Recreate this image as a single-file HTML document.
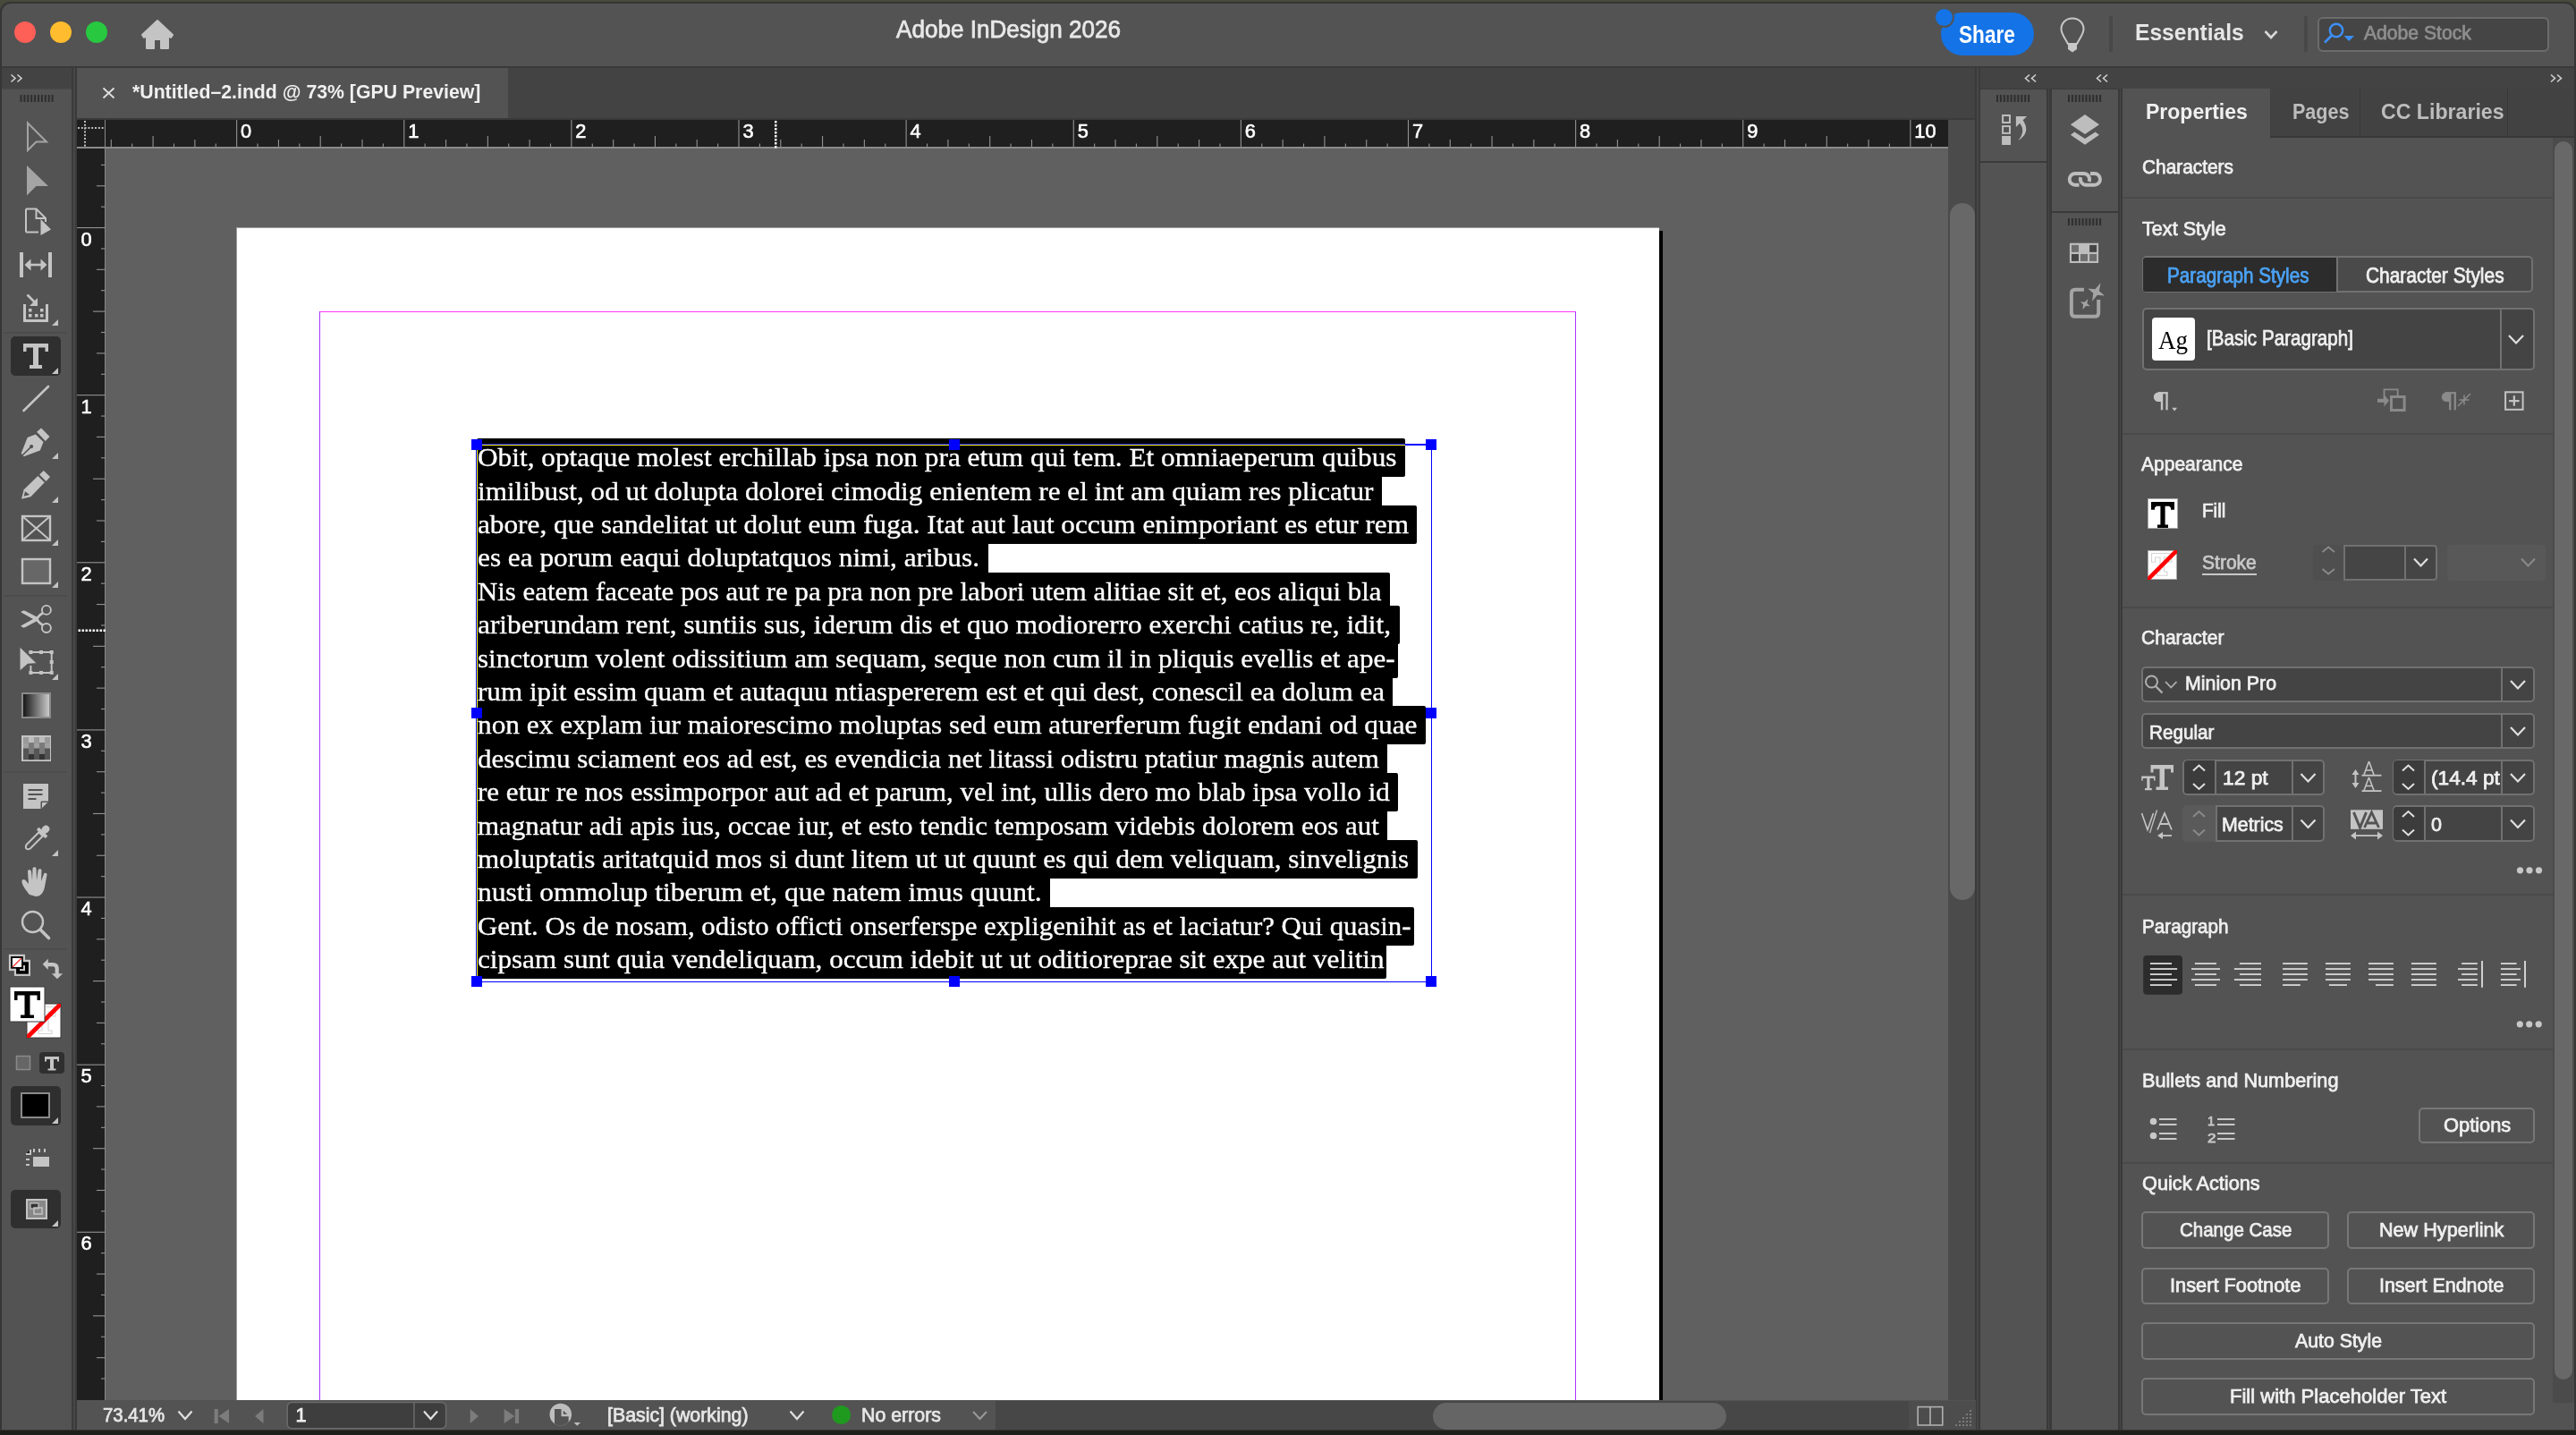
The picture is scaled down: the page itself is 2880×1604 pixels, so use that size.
<!DOCTYPE html><html><head><meta charset="utf-8"><style>html,body{margin:0;padding:0;}body{width:2880px;height:1604px;position:relative;overflow:hidden;background:#2c2e24;}body>div,body>svg{position:absolute;}</style></head><body>
<div style="left:0px;top:0px;width:2880px;height:1604px;background:#484a3c;"></div>
<div style="left:0px;top:1598px;width:2880px;height:6px;background:#1d201a;"></div>
<div style="left:0px;top:2px;width:2880px;height:1597px;background:#363636;border-radius:11px 11px 0 0"></div>
<div style="left:1.5px;top:3.5px;width:2876px;height:1594.5px;background:#535353;border-radius:10px 10px 0 0"></div>
<div style="left:2px;top:74px;width:2876px;height:2px;background:#3a3a3a;"></div>
<div style="left:16px;top:24px;width:24px;height:24px;background:#fe5f57;border-radius:50%"></div>
<div style="left:56px;top:24px;width:24px;height:24px;background:#febc2e;border-radius:50%"></div>
<div style="left:96px;top:24px;width:24px;height:24px;background:#28c840;border-radius:50%"></div>
<svg style="left:156px;top:21px;" width="40" height="36" viewBox="0 0 40 36"><path d="M20 2 L37 18 L35 21 L32 19 L32 33 L24 33 L24 23 L16 23 L16 33 L8 33 L8 19 L5 21 L3 18 Z" fill="#c4c4c4" stroke="#c4c4c4" stroke-width="2" stroke-linejoin="round"/></svg>
<div style="transform:scaleX(0.9709);left:1002.00px;top:17.76px;font:400 26.89px 'Liberation Sans', sans-serif;line-height:30.04px;color:#e8e8e8;white-space:pre;transform-origin:0 0;-webkit-text-stroke:0.75px #e8e8e8;">Adobe InDesign 2026</div>
<div style="left:2170px;top:14px;width:104px;height:48px;background:#1473e6;border-radius:24px"></div>
<div style="left:2161.5px;top:7.5px;width:23px;height:23px;background:#535353;border-radius:50%"></div>
<div style="left:2163.5px;top:9.5px;width:19px;height:19px;background:#1473e6;border-radius:50%"></div>
<div style="transform:scaleX(0.8420);left:2190.00px;top:23.86px;font:700 26.89px 'Liberation Sans', sans-serif;line-height:30.04px;color:#ffffff;white-space:pre;transform-origin:0 0;">Share</div>
<svg style="left:2300px;top:18px;" width="34" height="44" viewBox="0 0 34 44"><path d="M17 2.5 C9.5 2.5 4.5 8 4.5 14.5 C4.5 20 9 25 12 31 L22 31 C25 25 29.5 20 29.5 14.5 C29.5 8 24.5 2.5 17 2.5 Z" fill="none" stroke="#c8c8c8" stroke-width="2"/><path d="M12 31 L22 31 L22 37 L17 40.5 L12 37 Z" fill="#c8c8c8"/></svg>
<div style="left:2358px;top:18px;width:3.5px;height:40px;background:#484848;"></div>
<div style="transform:scaleX(0.9305);left:2387.10px;top:22.16px;font:700 26.45px 'Liberation Sans', sans-serif;line-height:29.55px;color:#e6e6e6;white-space:pre;transform-origin:0 0;">Essentials</div>
<svg style="left:2530px;top:32px;" width="18" height="14" viewBox="0 0 18 14"><path d="M2.5 3 L9 10 L15.5 3" fill="none" stroke="#d8d8d8" stroke-width="2.6"/></svg>
<div style="left:2576px;top:18px;width:3.5px;height:40px;background:#484848;"></div>
<div style="left:2590.5px;top:18.5px;width:259px;height:39.5px;background:#454545;border:2px solid #6c6c6c;border-radius:6px;box-sizing:border-box"></div>
<svg style="left:2596px;top:24px;" width="40" height="28" viewBox="0 0 40 28"><circle cx="16" cy="10" r="7.2" fill="none" stroke="#3d8ff5" stroke-width="2.4"/><path d="M11 15.5 L3 23.5" stroke="#3d8ff5" stroke-width="2.6"/><path d="M24.5 16 L36 16 L30.2 22 Z" fill="#3d8ff5"/></svg>
<div style="transform:scaleX(0.9630);left:2642.70px;top:24.54px;font:400 21.95px 'Liberation Sans', sans-serif;line-height:24.52px;color:#8e8e8e;white-space:pre;transform-origin:0 0;-webkit-text-stroke:0.75px #8e8e8e;">Adobe Stock</div>
<div style="left:2px;top:76px;width:78px;height:22px;background:#434343;"></div>
<div style="left:2px;top:98px;width:78px;height:2px;background:#474747;"></div>
<div style="left:80px;top:76px;width:6px;height:1522px;background:#3a3a3a;"></div>
<div style="left:82px;top:76px;width:2px;height:1522px;background:#474747;"></div>
<svg style="left:0;top:0" width="86" height="1604"><path d="M12.5 83.5 L17 87.5 L12.5 91.5 M19.5 83.5 L24 87.5 L19.5 91.5" fill="none" stroke="#d0d0d0" stroke-width="1.6"/><rect x="22.5" y="106" width="2" height="8" fill="#2e2e2e"/><rect x="26.4" y="106" width="2" height="8" fill="#2e2e2e"/><rect x="30.3" y="106" width="2" height="8" fill="#2e2e2e"/><rect x="34.2" y="106" width="2" height="8" fill="#2e2e2e"/><rect x="38.1" y="106" width="2" height="8" fill="#2e2e2e"/><rect x="42.0" y="106" width="2" height="8" fill="#2e2e2e"/><rect x="45.9" y="106" width="2" height="8" fill="#2e2e2e"/><rect x="49.8" y="106" width="2" height="8" fill="#2e2e2e"/><rect x="53.7" y="106" width="2" height="8" fill="#2e2e2e"/><rect x="57.6" y="106" width="2" height="8" fill="#2e2e2e"/><path d="M31 137.5 L52 158.5 L40.5 158.5 L31 168 Z" fill="none" stroke="#a4a4a4" stroke-width="2" stroke-linejoin="miter"/><path d="M30 185 L54 208 L40.5 208 L30 218.5 Z" fill="#a4a4a4"/><path d="M29 233.5 L40.5 233.5 L51 244 L51 248 M43 259.5 L29 259.5 Z" fill="none" stroke="#c4c4c4" stroke-width="2"/><path d="M29 233.5 L29 259.5" stroke="#c4c4c4" stroke-width="2"/><path d="M40.5 233.5 L40.5 244 L51 244" fill="none" stroke="#c4c4c4" stroke-width="2"/><path d="M45.5 245 L57 256.5 L45.5 263 Z" fill="#c4c4c4"/><rect x="22" y="282" width="4" height="28" fill="#c4c4c4"/><rect x="54" y="282" width="4" height="28" fill="#c4c4c4"/><path d="M31 296 L49 296" stroke="#c4c4c4" stroke-width="2.6"/><path d="M27.5 296 L34.5 289.5 L34.5 302.5 Z M52.5 296 L45.5 289.5 L45.5 302.5 Z" fill="#c4c4c4"/><path d="M30.5 329.5 L40 339" stroke="#c4c4c4" stroke-width="2.6"/><path d="M42 333 L42 342 L33 342 Z" fill="#c4c4c4"/><path d="M27.5 340 L27.5 358.5 L52.5 358.5 L52.5 340" fill="none" stroke="#c4c4c4" stroke-width="3"/><rect x="32" y="345" width="3.5" height="3.5" fill="#c4c4c4"/><rect x="32" y="351" width="3.5" height="3.5" fill="#c4c4c4"/><rect x="39" y="351" width="3.5" height="3.5" fill="#c4c4c4"/><rect x="45" y="351" width="3.5" height="3.5" fill="#c4c4c4"/><rect x="45" y="345" width="3.5" height="3.5" fill="#c4c4c4"/><path d="M65 357 L65 364 L58 364 Z" fill="#c4c4c4"/><rect x="4" y="371" width="71" height="1.5" fill="#4b4b4b"/><rect x="4" y="665" width="71" height="1.5" fill="#4b4b4b"/><rect x="4" y="862" width="71" height="1.5" fill="#4b4b4b"/><rect x="4" y="1060" width="71" height="1.5" fill="#4b4b4b"/><rect x="12" y="376" width="56" height="44" rx="5" fill="#2f2f2f"/><path d="M26 384 L54 384 L54 393 L50.5 393 L50.5 388.5 L43 388.5 L43 408 L47 408 L47 412 L33 412 L33 408 L37 408 L37 388.5 L29.5 388.5 L29.5 393 L26 393 Z" fill="#c4c4c4"/><path d="M65 411 L65 418 L58 418 Z" fill="#c4c4c4"/><path d="M26.5 459 L54 432" stroke="#c4c4c4" stroke-width="2.6" stroke-linecap="round"/><path d="M41.1 482.7 L46.1 478.4 L55.5 488 L50.8 493.1 Z" fill="#c4c4c4"/><path d="M39.8 485.4 L30.7 489 L23.7 506.8 L26.7 510.2 L44.8 503.5 L48.5 494.1 Z" fill="#c4c4c4"/><path d="M25 509 L35.1 499.1" stroke="#535353" stroke-width="1.6"/><circle cx="35.1" cy="499.1" r="2.1" fill="#535353"/><path d="M65 506 L65 513 L58 513 Z" fill="#c4c4c4"/><path d="M44.1 530.6 L48.8 526.1 L56 532.9 L51.5 537.9 Z" fill="#c4c4c4"/><path d="M42.4 531.9 L49.8 539.3 L34.4 555.3 L24 557.7 L26.7 547.3 Z" fill="#c4c4c4"/><path d="M28 549.3 L33.1 553 L26.7 554.7 Z" fill="#535353"/><path d="M65 555 L65 562 L58 562 Z" fill="#c4c4c4"/><rect x="25" y="577" width="31" height="27" fill="none" stroke="#c4c4c4" stroke-width="2.4"/><path d="M25 577 L56 604 M56 577 L25 604" stroke="#c4c4c4" stroke-width="2"/><path d="M65 603 L65 610 L58 610 Z" fill="#c4c4c4"/><rect x="25" y="625" width="31" height="27" fill="#676767" stroke="#c4c4c4" stroke-width="2.4"/><path d="M65 650 L65 657 L58 657 Z" fill="#c4c4c4"/><circle cx="51.9" cy="681.9" r="5" fill="none" stroke="#c4c4c4" stroke-width="1.9"/><circle cx="51.9" cy="702" r="5" fill="none" stroke="#c4c4c4" stroke-width="1.9"/><path d="M23.3 684.3 Q25 681.6 28 682.7 L43.5 690.8 L40.5 694 Z" fill="#c4c4c4"/><path d="M23.3 699.6 Q25 702.3 28 701.2 L43.5 693.1 L40.5 689.9 Z" fill="#c4c4c4"/><path d="M41 692 Q44 687 48 685.2 M41 692 Q44 697 48 698.7" fill="none" stroke="#c4c4c4" stroke-width="2.6"/><path d="M33.4 729 L58.7 729 M57.7 728 L57.7 752 M58.7 751.9 L33.4 751.9 M34.4 752 L34.4 744" fill="none" stroke="#c4c4c4" stroke-width="2"/><rect x="32.4" y="727" width="4" height="4" fill="#c4c4c4"/><rect x="44" y="727" width="4" height="4" fill="#c4c4c4"/><rect x="55.7" y="727" width="4" height="4" fill="#c4c4c4"/><rect x="55.7" y="738" width="4" height="4" fill="#c4c4c4"/><rect x="32.4" y="749.9" width="4" height="4" fill="#c4c4c4"/><rect x="44" y="749.9" width="4" height="4" fill="#c4c4c4"/><rect x="55.7" y="749.9" width="4" height="4" fill="#c4c4c4"/><path d="M22.1 723 L41.2 741.6 L30.9 742.2 L22.1 750 Z" fill="#c4c4c4" stroke="#535353" stroke-width="0.8"/><path d="M65 753 L65 760 L58 760 Z" fill="#c4c4c4"/><defs><linearGradient id="gr" x1="0" x2="1"><stop offset="0" stop-color="#111"/><stop offset="1" stop-color="#d0d0d0"/></linearGradient></defs><rect x="25" y="775" width="31" height="27" fill="url(#gr)" stroke="#8a8a8a" stroke-width="2"/><rect x="25" y="823" width="31" height="27" fill="#777" stroke="#c4c4c4" stroke-width="2"/><rect x="26" y="824.0" width="6" height="6.3" fill="#9a9a9a"/><rect x="32" y="824.0" width="6" height="6.3" fill="#bdbdbd"/><rect x="38" y="824.0" width="6" height="6.3" fill="#9a9a9a"/><rect x="44" y="824.0" width="6" height="6.3" fill="#bdbdbd"/><rect x="50" y="824.0" width="6" height="6.3" fill="#9a9a9a"/><rect x="26" y="830.3" width="6" height="6.3" fill="#a0a0a0"/><rect x="32" y="830.3" width="6" height="6.3" fill="#7a7a7a"/><rect x="38" y="830.3" width="6" height="6.3" fill="#a0a0a0"/><rect x="44" y="830.3" width="6" height="6.3" fill="#7a7a7a"/><rect x="50" y="830.3" width="6" height="6.3" fill="#a0a0a0"/><rect x="26" y="836.6" width="6" height="6.3" fill="#555"/><rect x="32" y="836.6" width="6" height="6.3" fill="#7a7a7a"/><rect x="38" y="836.6" width="6" height="6.3" fill="#555"/><rect x="44" y="836.6" width="6" height="6.3" fill="#7a7a7a"/><rect x="50" y="836.6" width="6" height="6.3" fill="#555"/><rect x="26" y="842.9" width="6" height="6.3" fill="#555"/><rect x="32" y="842.9" width="6" height="6.3" fill="#333"/><rect x="38" y="842.9" width="6" height="6.3" fill="#555"/><rect x="44" y="842.9" width="6" height="6.3" fill="#333"/><rect x="50" y="842.9" width="6" height="6.3" fill="#555"/><path d="M26 876 L54 876 L54 896 L46 904 L26 904 Z" fill="#c4c4c4"/><path d="M46 904 L46 896 L54 896" fill="#535353" stroke="#535353" stroke-width="1"/><path d="M47 903 L47 897 L53 897 Z" fill="#c4c4c4"/><rect x="31.5" y="882" width="16" height="2" fill="#535353"/><rect x="31.5" y="887" width="16" height="2" fill="#535353"/><rect x="31.5" y="892" width="9" height="2" fill="#535353"/><g transform="translate(40,938) rotate(45)"><rect x="-4" y="-20" width="8" height="9" rx="4" fill="#c4c4c4"/><rect x="-7" y="-12" width="14" height="4" rx="1" fill="#c4c4c4"/><path d="M-3 -8 L3 -8 L3 12 Q0 18 -3 12 Z" fill="none" stroke="#c4c4c4" stroke-width="2"/></g><path d="M65 950 L65 957 L58 957 Z" fill="#c4c4c4"/><path d="M33 1000 C29 995 25 990 24.5 986 C24 983 26.5 982 28.5 984 L32 988 L31 974 C31 971.5 34.5 971.5 35 974 L36 984 L36.5 971 C36.5 968.5 40.5 968.5 40.5 971 L41 984 L42.5 973 C43 970.5 46.5 970.5 46.5 973 L46 985 L49 977 C49.5 975 53 975.5 52.5 978 L50 991 C49 997 46 1002 40 1002 Z" fill="#c4c4c4"/><circle cx="36.5" cy="1030.5" r="11.5" fill="none" stroke="#c4c4c4" stroke-width="2.4"/><path d="M45 1039 L54.5 1048.5" stroke="#c4c4c4" stroke-width="3.6" stroke-linecap="round"/><rect x="9.9" y="1066.8" width="18.1" height="18.3" fill="#c8c8c8"/><rect x="15.9" y="1072.8" width="18.1" height="18.1" fill="#c8c8c8"/><rect x="12.1" y="1069" width="13.7" height="13.7" fill="#000"/><rect x="18.1" y="1075.2" width="13.8" height="13.5" fill="#000"/><rect x="13.9" y="1070.9" width="10.2" height="10.1" fill="#fff"/><path d="M14 1081 L24 1071" stroke="#ff3030" stroke-width="1.3"/><rect x="26" y="1079" width="2" height="6.1" fill="#c8c8c8"/><rect x="22" y="1083.1" width="6" height="2" fill="#c8c8c8"/><path d="M53 1078.2 L59 1078.2 Q63.7 1078.2 63.7 1083 L63.7 1089" fill="none" stroke="#c4c4c4" stroke-width="4.2"/><path d="M47.7 1077.8 L53.8 1071.7 L53.8 1084 Z M57.8 1088.2 L70.1 1088.2 L64 1094.2 Z" fill="#c4c4c4"/><rect x="30" y="1122" width="38" height="38" fill="#fff" stroke="#3a3a3a" stroke-width="1"/><path d="M51 1125.5 L62 1125.5 L62 1136 L58.5 1136 L58.5 1131 L54 1131 L54 1152 L58 1152 L58 1155.5 L43 1155.5 L43 1152 L47 1152 L47 1142" fill="none" stroke="#d4d4d4" stroke-width="1.1"/><defs><clipPath id="tb"><rect x="30" y="1122" width="38" height="38"/></clipPath></defs><path d="M28 1162 L70 1120" stroke="#ff0000" stroke-width="4.8" clip-path="url(#tb)"/><rect x="11" y="1103" width="39" height="39" fill="#fff" stroke="#3a3a3a" stroke-width="1"/><path d="M16 1108 L45 1108 L45 1118 L41.5 1118 L41.5 1112.5 L33.5 1112.5 L33.5 1134.5 L38 1134.5 L38 1138 L23 1138 L23 1134.5 L27.5 1134.5 L27.5 1112.5 L19.5 1112.5 L19.5 1118 L16 1118 Z" fill="#000"/><rect x="18.5" y="1180.5" width="15" height="15" fill="#666" stroke="#8a8a8a" stroke-width="1.5"/><rect x="44" y="1176" width="28" height="24" rx="4" fill="#2f2f2f"/><path d="M50 1181 L66 1181 L66 1186.5 L64 1186.5 L64 1184 L60 1184 L60 1194.5 L62.5 1194.5 L62.5 1196.5 L53.5 1196.5 L53.5 1194.5 L56 1194.5 L56 1184 L52 1184 L52 1186.5 L50 1186.5 Z" fill="#c4c4c4"/><rect x="12" y="1214" width="56" height="44" rx="5" fill="#2f2f2f"/><rect x="24" y="1222" width="31" height="27" fill="#000" stroke="#8a8a8a" stroke-width="2"/><path d="M65 1249 L65 1256 L58 1256 Z" fill="#c4c4c4"/><rect x="37" y="1293" width="18" height="11" fill="#c4c4c4"/><path d="M29 1290 L34 1290 L34 1285 M29 1296 L33 1296 M29 1302 L33 1302 M38 1284 L38 1288 M44 1284 L44 1288 M50 1284 L50 1288" stroke="#c4c4c4" stroke-width="2"/><rect x="12" y="1330" width="56" height="43" rx="5" fill="#2f2f2f"/><rect x="30" y="1341" width="22" height="21" fill="#888" stroke="#c4c4c4" stroke-width="2"/><rect x="34" y="1345" width="9" height="6" fill="#333" stroke="#c4c4c4" stroke-width="1.2"/><rect x="38" y="1350" width="9" height="7" fill="none" stroke="#c4c4c4" stroke-width="1.5"/><path d="M65 1364 L65 1371 L58 1371 Z" fill="#c4c4c4"/></svg>
<div style="left:86px;top:76px;width:2123px;height:56px;background:#434343;"></div>
<div style="left:86px;top:76px;width:482px;height:56px;background:#535353;"></div>
<div style="left:86px;top:132px;width:2123px;height:2px;background:#3a3a3a;"></div>
<svg style="left:114px;top:97px;" width="15" height="14" viewBox="0 0 15 14"><path d="M1.5 1.5 L13.5 12.5 M13.5 1.5 L1.5 12.5" stroke="#e0e0e0" stroke-width="1.8"/></svg>
<div style="transform:scaleX(0.9444);left:148.30px;top:89.81px;font:700 22.53px 'Liberation Sans', sans-serif;line-height:25.16px;color:#f0f0f0;white-space:pre;transform-origin:0 0;">*Untitled&#8211;2.indd @ 73% [GPU Preview]</div>
<div style="left:117px;top:165px;width:2061px;height:1401px;background:#606060;"></div>
<div style="left:86px;top:134px;width:2092px;height:30px;background:#1f1f1f;"></div>
<div style="left:86px;top:164px;width:31px;height:1402px;background:#1f1f1f;"></div>
<div style="left:86px;top:164px;width:2092px;height:1.5px;background:#8a8a8a;"></div>
<div style="left:116.5px;top:134px;width:1.5px;height:1432px;background:#8a8a8a;"></div>
<svg style="left:0;top:0" width="2880" height="1604"><rect x="87.0" y="142" width="2" height="2" fill="#bbb"/><rect x="94" y="135.0" width="2" height="2" fill="#bbb"/><rect x="90.8" y="142" width="2" height="2" fill="#bbb"/><rect x="94" y="138.8" width="2" height="2" fill="#bbb"/><rect x="94.6" y="142" width="2" height="2" fill="#bbb"/><rect x="94" y="142.6" width="2" height="2" fill="#bbb"/><rect x="98.4" y="142" width="2" height="2" fill="#bbb"/><rect x="94" y="146.4" width="2" height="2" fill="#bbb"/><rect x="102.2" y="142" width="2" height="2" fill="#bbb"/><rect x="94" y="150.2" width="2" height="2" fill="#bbb"/><rect x="106.0" y="142" width="2" height="2" fill="#bbb"/><rect x="94" y="154.0" width="2" height="2" fill="#bbb"/><rect x="109.8" y="142" width="2" height="2" fill="#bbb"/><rect x="94" y="157.8" width="2" height="2" fill="#bbb"/><rect x="113.6" y="142" width="2" height="2" fill="#bbb"/><rect x="94" y="161.6" width="2" height="2" fill="#bbb"/><rect x="123.76" y="156" width="1.1" height="8" fill="#939393"/><rect x="147.15" y="160.5" width="1.1" height="3.5" fill="#939393"/><rect x="170.54" y="152" width="1.1" height="12" fill="#939393"/><rect x="193.93" y="160.5" width="1.1" height="3.5" fill="#939393"/><rect x="217.32" y="156" width="1.1" height="8" fill="#939393"/><rect x="240.71" y="160.5" width="1.1" height="3.5" fill="#939393"/><rect x="264.10" y="134" width="1.1" height="30" fill="#939393"/><rect x="287.49" y="160.5" width="1.1" height="3.5" fill="#939393"/><rect x="310.88" y="156" width="1.1" height="8" fill="#939393"/><rect x="334.27" y="160.5" width="1.1" height="3.5" fill="#939393"/><rect x="357.66" y="152" width="1.1" height="12" fill="#939393"/><rect x="381.05" y="160.5" width="1.1" height="3.5" fill="#939393"/><rect x="404.44" y="156" width="1.1" height="8" fill="#939393"/><rect x="427.83" y="160.5" width="1.1" height="3.5" fill="#939393"/><rect x="451.22" y="134" width="1.1" height="30" fill="#939393"/><rect x="474.61" y="160.5" width="1.1" height="3.5" fill="#939393"/><rect x="498.00" y="156" width="1.1" height="8" fill="#939393"/><rect x="521.39" y="160.5" width="1.1" height="3.5" fill="#939393"/><rect x="544.78" y="152" width="1.1" height="12" fill="#939393"/><rect x="568.17" y="160.5" width="1.1" height="3.5" fill="#939393"/><rect x="591.56" y="156" width="1.1" height="8" fill="#939393"/><rect x="614.95" y="160.5" width="1.1" height="3.5" fill="#939393"/><rect x="638.34" y="134" width="1.1" height="30" fill="#939393"/><rect x="661.73" y="160.5" width="1.1" height="3.5" fill="#939393"/><rect x="685.12" y="156" width="1.1" height="8" fill="#939393"/><rect x="708.51" y="160.5" width="1.1" height="3.5" fill="#939393"/><rect x="731.90" y="152" width="1.1" height="12" fill="#939393"/><rect x="755.29" y="160.5" width="1.1" height="3.5" fill="#939393"/><rect x="778.68" y="156" width="1.1" height="8" fill="#939393"/><rect x="802.07" y="160.5" width="1.1" height="3.5" fill="#939393"/><rect x="825.46" y="134" width="1.1" height="30" fill="#939393"/><rect x="848.85" y="160.5" width="1.1" height="3.5" fill="#939393"/><rect x="872.24" y="156" width="1.1" height="8" fill="#939393"/><rect x="895.63" y="160.5" width="1.1" height="3.5" fill="#939393"/><rect x="919.02" y="152" width="1.1" height="12" fill="#939393"/><rect x="942.41" y="160.5" width="1.1" height="3.5" fill="#939393"/><rect x="965.80" y="156" width="1.1" height="8" fill="#939393"/><rect x="989.19" y="160.5" width="1.1" height="3.5" fill="#939393"/><rect x="1012.58" y="134" width="1.1" height="30" fill="#939393"/><rect x="1035.97" y="160.5" width="1.1" height="3.5" fill="#939393"/><rect x="1059.36" y="156" width="1.1" height="8" fill="#939393"/><rect x="1082.75" y="160.5" width="1.1" height="3.5" fill="#939393"/><rect x="1106.14" y="152" width="1.1" height="12" fill="#939393"/><rect x="1129.53" y="160.5" width="1.1" height="3.5" fill="#939393"/><rect x="1152.92" y="156" width="1.1" height="8" fill="#939393"/><rect x="1176.31" y="160.5" width="1.1" height="3.5" fill="#939393"/><rect x="1199.70" y="134" width="1.1" height="30" fill="#939393"/><rect x="1223.09" y="160.5" width="1.1" height="3.5" fill="#939393"/><rect x="1246.48" y="156" width="1.1" height="8" fill="#939393"/><rect x="1269.87" y="160.5" width="1.1" height="3.5" fill="#939393"/><rect x="1293.26" y="152" width="1.1" height="12" fill="#939393"/><rect x="1316.65" y="160.5" width="1.1" height="3.5" fill="#939393"/><rect x="1340.04" y="156" width="1.1" height="8" fill="#939393"/><rect x="1363.43" y="160.5" width="1.1" height="3.5" fill="#939393"/><rect x="1386.82" y="134" width="1.1" height="30" fill="#939393"/><rect x="1410.21" y="160.5" width="1.1" height="3.5" fill="#939393"/><rect x="1433.60" y="156" width="1.1" height="8" fill="#939393"/><rect x="1456.99" y="160.5" width="1.1" height="3.5" fill="#939393"/><rect x="1480.38" y="152" width="1.1" height="12" fill="#939393"/><rect x="1503.77" y="160.5" width="1.1" height="3.5" fill="#939393"/><rect x="1527.16" y="156" width="1.1" height="8" fill="#939393"/><rect x="1550.55" y="160.5" width="1.1" height="3.5" fill="#939393"/><rect x="1573.94" y="134" width="1.1" height="30" fill="#939393"/><rect x="1597.33" y="160.5" width="1.1" height="3.5" fill="#939393"/><rect x="1620.72" y="156" width="1.1" height="8" fill="#939393"/><rect x="1644.11" y="160.5" width="1.1" height="3.5" fill="#939393"/><rect x="1667.50" y="152" width="1.1" height="12" fill="#939393"/><rect x="1690.89" y="160.5" width="1.1" height="3.5" fill="#939393"/><rect x="1714.28" y="156" width="1.1" height="8" fill="#939393"/><rect x="1737.67" y="160.5" width="1.1" height="3.5" fill="#939393"/><rect x="1761.06" y="134" width="1.1" height="30" fill="#939393"/><rect x="1784.45" y="160.5" width="1.1" height="3.5" fill="#939393"/><rect x="1807.84" y="156" width="1.1" height="8" fill="#939393"/><rect x="1831.23" y="160.5" width="1.1" height="3.5" fill="#939393"/><rect x="1854.62" y="152" width="1.1" height="12" fill="#939393"/><rect x="1878.01" y="160.5" width="1.1" height="3.5" fill="#939393"/><rect x="1901.40" y="156" width="1.1" height="8" fill="#939393"/><rect x="1924.79" y="160.5" width="1.1" height="3.5" fill="#939393"/><rect x="1948.18" y="134" width="1.1" height="30" fill="#939393"/><rect x="1971.57" y="160.5" width="1.1" height="3.5" fill="#939393"/><rect x="1994.96" y="156" width="1.1" height="8" fill="#939393"/><rect x="2018.35" y="160.5" width="1.1" height="3.5" fill="#939393"/><rect x="2041.74" y="152" width="1.1" height="12" fill="#939393"/><rect x="2065.13" y="160.5" width="1.1" height="3.5" fill="#939393"/><rect x="2088.52" y="156" width="1.1" height="8" fill="#939393"/><rect x="2111.91" y="160.5" width="1.1" height="3.5" fill="#939393"/><rect x="2135.30" y="134" width="1.1" height="30" fill="#939393"/><rect x="2158.69" y="160.5" width="1.1" height="3.5" fill="#939393"/></svg>
<div style="left:269.10px;top:135.27px;font:400 21.80px 'Liberation Sans', sans-serif;line-height:24.35px;color:#ffffff;white-space:pre;transform-origin:0 0;-webkit-text-stroke:0.6px #ffffff;">0</div>
<div style="left:456.22px;top:135.27px;font:400 21.80px 'Liberation Sans', sans-serif;line-height:24.35px;color:#ffffff;white-space:pre;transform-origin:0 0;-webkit-text-stroke:0.6px #ffffff;">1</div>
<div style="left:643.34px;top:135.27px;font:400 21.80px 'Liberation Sans', sans-serif;line-height:24.35px;color:#ffffff;white-space:pre;transform-origin:0 0;-webkit-text-stroke:0.6px #ffffff;">2</div>
<div style="left:830.46px;top:135.27px;font:400 21.80px 'Liberation Sans', sans-serif;line-height:24.35px;color:#ffffff;white-space:pre;transform-origin:0 0;-webkit-text-stroke:0.6px #ffffff;">3</div>
<div style="left:1017.58px;top:135.27px;font:400 21.80px 'Liberation Sans', sans-serif;line-height:24.35px;color:#ffffff;white-space:pre;transform-origin:0 0;-webkit-text-stroke:0.6px #ffffff;">4</div>
<div style="left:1204.70px;top:135.27px;font:400 21.80px 'Liberation Sans', sans-serif;line-height:24.35px;color:#ffffff;white-space:pre;transform-origin:0 0;-webkit-text-stroke:0.6px #ffffff;">5</div>
<div style="left:1391.82px;top:135.27px;font:400 21.80px 'Liberation Sans', sans-serif;line-height:24.35px;color:#ffffff;white-space:pre;transform-origin:0 0;-webkit-text-stroke:0.6px #ffffff;">6</div>
<div style="left:1578.94px;top:135.27px;font:400 21.80px 'Liberation Sans', sans-serif;line-height:24.35px;color:#ffffff;white-space:pre;transform-origin:0 0;-webkit-text-stroke:0.6px #ffffff;">7</div>
<div style="left:1766.06px;top:135.27px;font:400 21.80px 'Liberation Sans', sans-serif;line-height:24.35px;color:#ffffff;white-space:pre;transform-origin:0 0;-webkit-text-stroke:0.6px #ffffff;">8</div>
<div style="left:1953.18px;top:135.27px;font:400 21.80px 'Liberation Sans', sans-serif;line-height:24.35px;color:#ffffff;white-space:pre;transform-origin:0 0;-webkit-text-stroke:0.6px #ffffff;">9</div>
<div style="left:2140.30px;top:135.27px;font:400 21.80px 'Liberation Sans', sans-serif;line-height:24.35px;color:#ffffff;white-space:pre;transform-origin:0 0;-webkit-text-stroke:0.6px #ffffff;">10</div>
<svg style="left:0;top:0" width="2880" height="1604"><rect x="113" y="183.83" width="4" height="1.1" fill="#939393"/><rect x="108" y="207.22" width="9" height="1.1" fill="#939393"/><rect x="113" y="230.61" width="4" height="1.1" fill="#939393"/><rect x="86" y="254.00" width="31" height="1.1" fill="#939393"/><rect x="113" y="277.39" width="4" height="1.1" fill="#939393"/><rect x="108" y="300.78" width="9" height="1.1" fill="#939393"/><rect x="113" y="324.17" width="4" height="1.1" fill="#939393"/><rect x="104" y="347.56" width="13" height="1.1" fill="#939393"/><rect x="113" y="370.95" width="4" height="1.1" fill="#939393"/><rect x="108" y="394.34" width="9" height="1.1" fill="#939393"/><rect x="113" y="417.73" width="4" height="1.1" fill="#939393"/><rect x="86" y="441.12" width="31" height="1.1" fill="#939393"/><rect x="113" y="464.51" width="4" height="1.1" fill="#939393"/><rect x="108" y="487.90" width="9" height="1.1" fill="#939393"/><rect x="113" y="511.29" width="4" height="1.1" fill="#939393"/><rect x="104" y="534.68" width="13" height="1.1" fill="#939393"/><rect x="113" y="558.07" width="4" height="1.1" fill="#939393"/><rect x="108" y="581.46" width="9" height="1.1" fill="#939393"/><rect x="113" y="604.85" width="4" height="1.1" fill="#939393"/><rect x="86" y="628.24" width="31" height="1.1" fill="#939393"/><rect x="113" y="651.63" width="4" height="1.1" fill="#939393"/><rect x="108" y="675.02" width="9" height="1.1" fill="#939393"/><rect x="113" y="698.41" width="4" height="1.1" fill="#939393"/><rect x="104" y="721.80" width="13" height="1.1" fill="#939393"/><rect x="113" y="745.19" width="4" height="1.1" fill="#939393"/><rect x="108" y="768.58" width="9" height="1.1" fill="#939393"/><rect x="113" y="791.97" width="4" height="1.1" fill="#939393"/><rect x="86" y="815.36" width="31" height="1.1" fill="#939393"/><rect x="113" y="838.75" width="4" height="1.1" fill="#939393"/><rect x="108" y="862.14" width="9" height="1.1" fill="#939393"/><rect x="113" y="885.53" width="4" height="1.1" fill="#939393"/><rect x="104" y="908.92" width="13" height="1.1" fill="#939393"/><rect x="113" y="932.31" width="4" height="1.1" fill="#939393"/><rect x="108" y="955.70" width="9" height="1.1" fill="#939393"/><rect x="113" y="979.09" width="4" height="1.1" fill="#939393"/><rect x="86" y="1002.48" width="31" height="1.1" fill="#939393"/><rect x="113" y="1025.87" width="4" height="1.1" fill="#939393"/><rect x="108" y="1049.26" width="9" height="1.1" fill="#939393"/><rect x="113" y="1072.65" width="4" height="1.1" fill="#939393"/><rect x="104" y="1096.04" width="13" height="1.1" fill="#939393"/><rect x="113" y="1119.43" width="4" height="1.1" fill="#939393"/><rect x="108" y="1142.82" width="9" height="1.1" fill="#939393"/><rect x="113" y="1166.21" width="4" height="1.1" fill="#939393"/><rect x="86" y="1189.60" width="31" height="1.1" fill="#939393"/><rect x="113" y="1212.99" width="4" height="1.1" fill="#939393"/><rect x="108" y="1236.38" width="9" height="1.1" fill="#939393"/><rect x="113" y="1259.77" width="4" height="1.1" fill="#939393"/><rect x="104" y="1283.16" width="13" height="1.1" fill="#939393"/><rect x="113" y="1306.55" width="4" height="1.1" fill="#939393"/><rect x="108" y="1329.94" width="9" height="1.1" fill="#939393"/><rect x="113" y="1353.33" width="4" height="1.1" fill="#939393"/><rect x="86" y="1376.72" width="31" height="1.1" fill="#939393"/><rect x="113" y="1400.11" width="4" height="1.1" fill="#939393"/><rect x="108" y="1423.50" width="9" height="1.1" fill="#939393"/><rect x="113" y="1446.89" width="4" height="1.1" fill="#939393"/><rect x="104" y="1470.28" width="13" height="1.1" fill="#939393"/><rect x="113" y="1493.67" width="4" height="1.1" fill="#939393"/><rect x="108" y="1517.06" width="9" height="1.1" fill="#939393"/><rect x="113" y="1540.45" width="4" height="1.1" fill="#939393"/><rect x="87.5" y="703.5" width="2.5" height="2.5" fill="#fff"/><rect x="91.5" y="703.5" width="2.5" height="2.5" fill="#fff"/><rect x="95.5" y="703.5" width="2.5" height="2.5" fill="#fff"/><rect x="99.5" y="703.5" width="2.5" height="2.5" fill="#fff"/><rect x="103.5" y="703.5" width="2.5" height="2.5" fill="#fff"/><rect x="107.5" y="703.5" width="2.5" height="2.5" fill="#fff"/><rect x="111.5" y="703.5" width="2.5" height="2.5" fill="#fff"/><rect x="115.5" y="703.5" width="2.5" height="2.5" fill="#fff"/><rect x="866" y="135.0" width="2.5" height="2.5" fill="#fff"/><rect x="866" y="139.0" width="2.5" height="2.5" fill="#fff"/><rect x="866" y="143.0" width="2.5" height="2.5" fill="#fff"/><rect x="866" y="147.0" width="2.5" height="2.5" fill="#fff"/><rect x="866" y="151.0" width="2.5" height="2.5" fill="#fff"/><rect x="866" y="155.0" width="2.5" height="2.5" fill="#fff"/><rect x="866" y="159.0" width="2.5" height="2.5" fill="#fff"/><rect x="866" y="163.0" width="2.5" height="2.5" fill="#fff"/></svg>
<div style="left:90.50px;top:255.77px;font:400 21.80px 'Liberation Sans', sans-serif;line-height:24.35px;color:#ffffff;white-space:pre;transform-origin:0 0;-webkit-text-stroke:0.6px #ffffff;">0</div>
<div style="left:90.50px;top:442.89px;font:400 21.80px 'Liberation Sans', sans-serif;line-height:24.35px;color:#ffffff;white-space:pre;transform-origin:0 0;-webkit-text-stroke:0.6px #ffffff;">1</div>
<div style="left:90.50px;top:630.01px;font:400 21.80px 'Liberation Sans', sans-serif;line-height:24.35px;color:#ffffff;white-space:pre;transform-origin:0 0;-webkit-text-stroke:0.6px #ffffff;">2</div>
<div style="left:90.50px;top:817.13px;font:400 21.80px 'Liberation Sans', sans-serif;line-height:24.35px;color:#ffffff;white-space:pre;transform-origin:0 0;-webkit-text-stroke:0.6px #ffffff;">3</div>
<div style="left:90.50px;top:1004.25px;font:400 21.80px 'Liberation Sans', sans-serif;line-height:24.35px;color:#ffffff;white-space:pre;transform-origin:0 0;-webkit-text-stroke:0.6px #ffffff;">4</div>
<div style="left:90.50px;top:1191.37px;font:400 21.80px 'Liberation Sans', sans-serif;line-height:24.35px;color:#ffffff;white-space:pre;transform-origin:0 0;-webkit-text-stroke:0.6px #ffffff;">5</div>
<div style="left:90.50px;top:1378.49px;font:400 21.80px 'Liberation Sans', sans-serif;line-height:24.35px;color:#ffffff;white-space:pre;transform-origin:0 0;-webkit-text-stroke:0.6px #ffffff;">6</div>
<div style="left:2178px;top:134px;width:31px;height:1432px;background:#4b4b4b;"></div>
<div style="left:2180px;top:227px;width:28px;height:779px;background:#686868;border-radius:14px"></div>
<div style="left:2208px;top:76px;width:6px;height:1522px;background:#3a3a3a;"></div>
<div style="left:2210px;top:76px;width:2px;height:1522px;background:#474747;"></div>
<div style="left:1855px;top:258px;width:4px;height:1307px;background:#000;"></div>
<div style="left:264px;top:254px;width:1591px;height:1311px;background:#ffffff;"></div>
<div style="left:264px;top:254px;width:1591px;height:1px;background:#9a9a9a;"></div>
<div style="left:264px;top:254px;width:1px;height:1311px;background:#9a9a9a;"></div>
<div style="left:357px;top:348px;width:1405px;height:1.3px;background:#ff33ff;"></div>
<div style="left:357px;top:348px;width:1.3px;height:1217px;background:#a833ff;"></div>
<div style="left:1760.7px;top:348px;width:1.3px;height:1217px;background:#a833ff;"></div>
<div style="left:533px;top:490.1px;width:1038px;height:43.2px;background:#000;border-radius:2px"></div>
<div style="left:533px;top:527.5px;width:1012px;height:43.2px;background:#000;border-radius:2px"></div>
<div style="left:533px;top:564.9px;width:1051px;height:43.2px;background:#000;border-radius:2px"></div>
<div style="left:533px;top:602.3px;width:572px;height:43.2px;background:#000;border-radius:2px"></div>
<div style="left:533px;top:639.7px;width:1021px;height:43.2px;background:#000;border-radius:2px"></div>
<div style="left:533px;top:677.1px;width:1032px;height:43.2px;background:#000;border-radius:2px"></div>
<div style="left:533px;top:714.5px;width:1030px;height:43.2px;background:#000;border-radius:2px"></div>
<div style="left:533px;top:751.9px;width:1024px;height:43.2px;background:#000;border-radius:2px"></div>
<div style="left:533px;top:789.3px;width:1061px;height:43.2px;background:#000;border-radius:2px"></div>
<div style="left:533px;top:826.7px;width:1018px;height:43.2px;background:#000;border-radius:2px"></div>
<div style="left:533px;top:864.1px;width:1030px;height:43.2px;background:#000;border-radius:2px"></div>
<div style="left:533px;top:901.5px;width:1018px;height:43.2px;background:#000;border-radius:2px"></div>
<div style="left:533px;top:938.9px;width:1052px;height:43.2px;background:#000;border-radius:2px"></div>
<div style="left:533px;top:976.3px;width:641px;height:43.2px;background:#000;border-radius:2px"></div>
<div style="left:533px;top:1013.7px;width:1048px;height:43.2px;background:#000;border-radius:2px"></div>
<div style="left:533px;top:1051.1px;width:1017px;height:43.2px;background:#000;border-radius:2px"></div>
<div style="transform:scaleX(1.0488);left:533.50px;top:494.11px;font:400 29.85px 'Liberation Serif', serif;line-height:33.04px;color:#ffffff;white-space:pre;transform-origin:0 0;-webkit-text-stroke:0.35px #ffffff;">Obit, optaque molest erchillab ipsa non pra etum qui tem. Et omniaeperum quibus</div>
<div style="transform:scaleX(1.0453);left:533.50px;top:531.51px;font:400 29.85px 'Liberation Serif', serif;line-height:33.04px;color:#ffffff;white-space:pre;transform-origin:0 0;-webkit-text-stroke:0.35px #ffffff;">imilibust, od ut dolupta dolorei cimodig enientem re el int am quiam res plicatur</div>
<div style="transform:scaleX(1.0468);left:533.50px;top:568.91px;font:400 29.85px 'Liberation Serif', serif;line-height:33.04px;color:#ffffff;white-space:pre;transform-origin:0 0;-webkit-text-stroke:0.35px #ffffff;">abore, que sandelitat ut dolut eum fuga. Itat aut laut occum enimporiant es etur rem</div>
<div style="transform:scaleX(1.0477);left:533.50px;top:606.31px;font:400 29.85px 'Liberation Serif', serif;line-height:33.04px;color:#ffffff;white-space:pre;transform-origin:0 0;-webkit-text-stroke:0.35px #ffffff;">es ea porum eaqui doluptatquos nimi, aribus.</div>
<div style="transform:scaleX(1.0334);left:533.50px;top:643.71px;font:400 29.85px 'Liberation Serif', serif;line-height:33.04px;color:#ffffff;white-space:pre;transform-origin:0 0;-webkit-text-stroke:0.35px #ffffff;">Nis eatem faceate pos aut re pa pra non pre labori utem alitiae sit et, eos aliqui bla</div>
<div style="transform:scaleX(1.0493);left:533.50px;top:681.11px;font:400 29.85px 'Liberation Serif', serif;line-height:33.04px;color:#ffffff;white-space:pre;transform-origin:0 0;-webkit-text-stroke:0.35px #ffffff;">ariberundam rent, suntiis sus, iderum dis et quo modiorerro exerchi catius re, idit,</div>
<div style="transform:scaleX(1.0397);left:533.50px;top:718.51px;font:400 29.85px 'Liberation Serif', serif;line-height:33.04px;color:#ffffff;white-space:pre;transform-origin:0 0;-webkit-text-stroke:0.35px #ffffff;">sinctorum volent odissitium am sequam, seque non cum il in pliquis evellis et ape-</div>
<div style="transform:scaleX(1.0431);left:533.50px;top:755.91px;font:400 29.85px 'Liberation Serif', serif;line-height:33.04px;color:#ffffff;white-space:pre;transform-origin:0 0;-webkit-text-stroke:0.35px #ffffff;">rum ipit essim quam et autaquu ntiaspererem est et qui dest, conescil ea dolum ea</div>
<div style="transform:scaleX(1.0493);left:533.50px;top:793.31px;font:400 29.85px 'Liberation Serif', serif;line-height:33.04px;color:#ffffff;white-space:pre;transform-origin:0 0;-webkit-text-stroke:0.35px #ffffff;">non ex explam iur maiorescimo moluptas sed eum aturerferum fugit endani od quae</div>
<div style="transform:scaleX(1.0403);left:533.50px;top:830.71px;font:400 29.85px 'Liberation Serif', serif;line-height:33.04px;color:#ffffff;white-space:pre;transform-origin:0 0;-webkit-text-stroke:0.35px #ffffff;">descimu sciament eos ad est, es evendicia net litassi odistru ptatiur magnis autem</div>
<div style="transform:scaleX(1.0401);left:533.50px;top:868.11px;font:400 29.85px 'Liberation Serif', serif;line-height:33.04px;color:#ffffff;white-space:pre;transform-origin:0 0;-webkit-text-stroke:0.35px #ffffff;">re etur re nos essimporpor aut ad et parum, vel int, ullis dero mo blab ipsa vollo id</div>
<div style="transform:scaleX(1.0381);left:533.50px;top:905.51px;font:400 29.85px 'Liberation Serif', serif;line-height:33.04px;color:#ffffff;white-space:pre;transform-origin:0 0;-webkit-text-stroke:0.35px #ffffff;">magnatur adi apis ius, occae iur, et esto tendic temposam videbis dolorem eos aut</div>
<div style="transform:scaleX(1.0432);left:533.50px;top:942.91px;font:400 29.85px 'Liberation Serif', serif;line-height:33.04px;color:#ffffff;white-space:pre;transform-origin:0 0;-webkit-text-stroke:0.35px #ffffff;">moluptatis aritatquid mos si dunt litem ut ut quunt es qui dem veliquam, sinvelignis</div>
<div style="transform:scaleX(1.0582);left:533.50px;top:980.31px;font:400 29.85px 'Liberation Serif', serif;line-height:33.04px;color:#ffffff;white-space:pre;transform-origin:0 0;-webkit-text-stroke:0.35px #ffffff;">nusti ommolup tiberum et, que natem imus quunt.</div>
<div style="transform:scaleX(1.0343);left:533.50px;top:1017.71px;font:400 29.85px 'Liberation Serif', serif;line-height:33.04px;color:#ffffff;white-space:pre;transform-origin:0 0;-webkit-text-stroke:0.35px #ffffff;">Gent. Os de nosam, odisto officti onserferspe expligenihit as et laciatur? Qui quasin-</div>
<div style="transform:scaleX(1.0425);left:533.50px;top:1055.11px;font:400 29.85px 'Liberation Serif', serif;line-height:33.04px;color:#ffffff;white-space:pre;transform-origin:0 0;-webkit-text-stroke:0.35px #ffffff;">cipsam sunt quia vendeliquam, occum idebit ut ut oditioreprae sit expe aut velitin</div>
<div style="left:532px;top:496px;width:1069px;height:1px;background:#0000ff;"></div>
<div style="left:533px;top:497px;width:1068px;height:1px;background:#ffff00;mix-blend-mode:difference"></div>
<div style="left:532px;top:496px;width:1px;height:602px;background:#0000ff;"></div>
<div style="left:533px;top:498px;width:1px;height:599px;background:#ffff00;mix-blend-mode:difference"></div>
<div style="left:1600px;top:496px;width:1px;height:602px;background:#0000ff;"></div>
<div style="left:532px;top:1096.5px;width:1069px;height:1.2px;background:#0000ff;"></div>
<div style="left:527px;top:491px;width:12px;height:12px;background:#0000ff;"></div>
<div style="left:527px;top:791px;width:12px;height:12px;background:#0000ff;"></div>
<div style="left:527px;top:1091px;width:12px;height:12px;background:#0000ff;"></div>
<div style="left:1060.5px;top:491px;width:12px;height:12px;background:#0000ff;"></div>
<div style="left:1060.5px;top:1091px;width:12px;height:12px;background:#0000ff;"></div>
<div style="left:1594px;top:491px;width:12px;height:12px;background:#0000ff;"></div>
<div style="left:1594px;top:791px;width:12px;height:12px;background:#0000ff;"></div>
<div style="left:1594px;top:1091px;width:12px;height:12px;background:#0000ff;"></div>
<div style="left:86px;top:1565px;width:2123px;height:33px;background:#535353;"></div>
<div style="left:1113px;top:1566px;width:1021px;height:32px;background:#474747;"></div>
<div style="left:2134px;top:1566px;width:75px;height:32px;background:#4d4d4d;"></div>
<div style="left:1602px;top:1568px;width:328px;height:29.5px;background:#656565;border-radius:15px"></div>
<div style="transform:scaleX(0.9462);left:115.00px;top:1569.93px;font:400 21.51px 'Liberation Sans', sans-serif;line-height:24.03px;color:#e6e6e6;white-space:pre;transform-origin:0 0;-webkit-text-stroke:0.75px #e6e6e6;">73.41%</div>
<svg style="left:0;top:0" width="2880" height="1604"><path d="M199.5 1577.5 L207.0 1586.0 L214.5 1577.5" fill="none" stroke="#e0e0e0" stroke-width="2.2"/><rect x="239.6" y="1575" width="4.2" height="16" fill="#7c7c7c"/><path d="M256 1575 L244.5 1583 L256 1591 Z" fill="#7c7c7c"/><path d="M294.5 1575 L285 1583 L294.5 1591 Z" fill="#7c7c7c"/><rect x="321.2" y="1567.6" width="177.4" height="29.2" rx="5" fill="#3e3e3e" stroke="#6b6b6b" stroke-width="1.5"/><rect x="462.2" y="1567.6" width="1.5" height="29.2" fill="#6b6b6b"/><path d="M474 1577.5 L481.5 1586.0 L489 1577.5" fill="none" stroke="#e0e0e0" stroke-width="2.2"/><path d="M525.7 1575 L535 1583 L525.7 1591 Z" fill="#7c7c7c"/><path d="M563.6 1575 L575.3 1583 L563.6 1591 Z" fill="#7c7c7c"/><rect x="575.9" y="1575" width="4.2" height="16" fill="#7c7c7c"/><defs><clipPath id="cc"><circle cx="626.8" cy="1581" r="12.3"/></clipPath></defs><circle cx="626.8" cy="1581" r="12.3" fill="#bdbdbd"/><path d="M620 1575 L627.5 1575 L627.5 1583.3 L635.7 1583.3 L635.7 1600 L620 1600 Z" fill="#535353" clip-path="url(#cc)"/><path d="M629.8 1576.8 L634.1 1580.7 L629.8 1580.7 Z" fill="#535353"/><path d="M641.6 1590 L649 1590 L645.3 1593.8 Z" fill="#bdbdbd"/><path d="M883.5 1577.5 L891.0 1586.0 L898.5 1577.5" fill="none" stroke="#e0e0e0" stroke-width="2.2"/><circle cx="940.6" cy="1581.5" r="10.5" fill="#1f9a1f"/><path d="M1088 1578 L1095.5 1586 L1103 1578" fill="none" stroke="#9a9a9a" stroke-width="2"/><rect x="2144.2" y="1572.6" width="27.6" height="20.4" fill="none" stroke="#b0b0b0" stroke-width="1.6"/><rect x="2157.2" y="1572.6" width="1.6" height="20.4" fill="#b0b0b0"/><rect x="2202.2" y="1576.2" width="1.7" height="1.7" fill="#8e8e8e"/><rect x="2198.2" y="1580.2" width="1.7" height="1.7" fill="#8e8e8e"/><rect x="2202.2" y="1580.2" width="1.7" height="1.7" fill="#8e8e8e"/><rect x="2194.2" y="1584.2" width="1.7" height="1.7" fill="#8e8e8e"/><rect x="2198.2" y="1584.2" width="1.7" height="1.7" fill="#8e8e8e"/><rect x="2202.2" y="1584.2" width="1.7" height="1.7" fill="#8e8e8e"/><rect x="2190.2" y="1588.2" width="1.7" height="1.7" fill="#8e8e8e"/><rect x="2194.2" y="1588.2" width="1.7" height="1.7" fill="#8e8e8e"/><rect x="2198.2" y="1588.2" width="1.7" height="1.7" fill="#8e8e8e"/><rect x="2202.2" y="1588.2" width="1.7" height="1.7" fill="#8e8e8e"/><rect x="2186.2" y="1592.2" width="1.7" height="1.7" fill="#8e8e8e"/><rect x="2190.2" y="1592.2" width="1.7" height="1.7" fill="#8e8e8e"/><rect x="2194.2" y="1592.2" width="1.7" height="1.7" fill="#8e8e8e"/><rect x="2198.2" y="1592.2" width="1.7" height="1.7" fill="#8e8e8e"/><rect x="2202.2" y="1592.2" width="1.7" height="1.7" fill="#8e8e8e"/></svg>
<div style="left:330.50px;top:1569.87px;font:400 21.80px 'Liberation Sans', sans-serif;line-height:24.35px;color:#f0f0f0;white-space:pre;transform-origin:0 0;-webkit-text-stroke:0.75px #f0f0f0;">1</div>
<div style="transform:scaleX(0.9912);left:678.50px;top:1570.13px;font:400 21.51px 'Liberation Sans', sans-serif;line-height:24.03px;color:#e6e6e6;white-space:pre;transform-origin:0 0;-webkit-text-stroke:0.75px #e6e6e6;">[Basic] (working)</div>
<div style="transform:scaleX(0.9932);left:963.00px;top:1570.13px;font:400 21.51px 'Liberation Sans', sans-serif;line-height:24.03px;color:#e6e6e6;white-space:pre;transform-origin:0 0;-webkit-text-stroke:0.75px #e6e6e6;">No errors</div>
<div style="left:2214px;top:76px;width:664px;height:23px;background:#434343;"></div>
<div style="left:2214px;top:98.5px;width:664px;height:1.5px;background:#3a3a3a;"></div>
<div style="left:2288px;top:99px;width:6px;height:1499px;background:#3a3a3a;"></div>
<div style="left:2368px;top:99px;width:5px;height:1499px;background:#3a3a3a;"></div>
<div style="left:2370px;top:99px;width:1.2px;height:1499px;background:#464646;"></div>
<div style="left:2290px;top:99px;width:1.2px;height:1499px;background:#464646;"></div>
<div style="left:2214px;top:179.8px;width:74px;height:2.2px;background:#3a3a3a;"></div>
<div style="left:2294px;top:236.3px;width:74px;height:2.2px;background:#3a3a3a;"></div>
<svg style="left:0;top:0" width="2880" height="1604"><path d="M2269 83.5 L2264.5 87.5 L2269 91.5 M2276 83.5 L2271.5 87.5 L2276 91.5" fill="none" stroke="#d0d0d0" stroke-width="1.6"/><path d="M2349 83.5 L2344.5 87.5 L2349 91.5 M2356 83.5 L2351.5 87.5 L2356 91.5" fill="none" stroke="#d0d0d0" stroke-width="1.6"/><path d="M2852 83.5 L2856.5 87.5 L2852 91.5 M2859 83.5 L2863.5 87.5 L2859 91.5" fill="none" stroke="#d0d0d0" stroke-width="1.6"/><rect x="2232.0" y="106" width="2" height="8" fill="#2e2e2e"/><rect x="2235.9" y="106" width="2" height="8" fill="#2e2e2e"/><rect x="2239.8" y="106" width="2" height="8" fill="#2e2e2e"/><rect x="2243.7" y="106" width="2" height="8" fill="#2e2e2e"/><rect x="2247.6" y="106" width="2" height="8" fill="#2e2e2e"/><rect x="2251.5" y="106" width="2" height="8" fill="#2e2e2e"/><rect x="2255.4" y="106" width="2" height="8" fill="#2e2e2e"/><rect x="2259.3" y="106" width="2" height="8" fill="#2e2e2e"/><rect x="2263.2" y="106" width="2" height="8" fill="#2e2e2e"/><rect x="2267.1" y="106" width="2" height="8" fill="#2e2e2e"/><rect x="2312.0" y="106" width="2" height="8" fill="#2e2e2e"/><rect x="2315.9" y="106" width="2" height="8" fill="#2e2e2e"/><rect x="2319.8" y="106" width="2" height="8" fill="#2e2e2e"/><rect x="2323.7" y="106" width="2" height="8" fill="#2e2e2e"/><rect x="2327.6" y="106" width="2" height="8" fill="#2e2e2e"/><rect x="2331.5" y="106" width="2" height="8" fill="#2e2e2e"/><rect x="2335.4" y="106" width="2" height="8" fill="#2e2e2e"/><rect x="2339.3" y="106" width="2" height="8" fill="#2e2e2e"/><rect x="2343.2" y="106" width="2" height="8" fill="#2e2e2e"/><rect x="2347.1" y="106" width="2" height="8" fill="#2e2e2e"/><rect x="2312.0" y="244" width="2" height="8" fill="#2e2e2e"/><rect x="2315.9" y="244" width="2" height="8" fill="#2e2e2e"/><rect x="2319.8" y="244" width="2" height="8" fill="#2e2e2e"/><rect x="2323.7" y="244" width="2" height="8" fill="#2e2e2e"/><rect x="2327.6" y="244" width="2" height="8" fill="#2e2e2e"/><rect x="2331.5" y="244" width="2" height="8" fill="#2e2e2e"/><rect x="2335.4" y="244" width="2" height="8" fill="#2e2e2e"/><rect x="2339.3" y="244" width="2" height="8" fill="#2e2e2e"/><rect x="2343.2" y="244" width="2" height="8" fill="#2e2e2e"/><rect x="2347.1" y="244" width="2" height="8" fill="#2e2e2e"/><rect x="2239.1" y="129" width="7.9" height="8" fill="none" stroke="#bdbdbd" stroke-width="2"/><rect x="2239.1" y="141.1" width="7.9" height="7.8" fill="none" stroke="#bdbdbd" stroke-width="2"/><rect x="2238.1" y="152" width="9.9" height="10" fill="#bdbdbd"/><path d="M2253.9 130.1 L2266.1 130.1 L2253.9 142 Z" fill="#bdbdbd"/><path d="M2257.5 137 Q2265.5 146 2256.4 157 Q2271 148 2261.5 134 Z" fill="#bdbdbd"/><path d="M2331 128 L2347 139.3 L2331 150 L2314.9 139.3 Z" fill="#bdbdbd"/><path d="M2314.9 150.7 L2319.3 147.4 L2331 154.9 L2342.6 147.4 L2347 150.7 L2331 161.8 Z" fill="#bdbdbd"/><path d="M2324.5 206.75 L2320.1 206.75 A6.375 6.375 0 0 1 2320.1 194 L2329.7 194 A6.375 6.375 0 0 1 2335.56 202.9" fill="none" stroke="#bdbdbd" stroke-width="3.9"/><path d="M2337 194 L2341.6 194 A6.375 6.375 0 0 1 2341.6 206.75 L2332.3 206.75 A6.375 6.375 0 0 1 2326.35 198.1" fill="none" stroke="#bdbdbd" stroke-width="3.9"/><rect x="2313.9" y="271.7" width="32.2" height="22.3" fill="#bdbdbd"/><rect x="2316" y="273.9" width="8" height="7.9" fill="#6e6e6e"/><rect x="2336.1" y="273.9" width="8" height="7.9" fill="#454545"/><rect x="2316" y="284" width="8" height="7.9" fill="#454545"/><rect x="2326" y="284" width="8" height="7.9" fill="#6e6e6e"/><rect x="2336.1" y="284" width="8" height="7.9" fill="#6e6e6e"/><path d="M2329.9 323.8 L2320 323.8 Q2315.9 323.8 2315.9 327.9 L2315.9 349.7 Q2315.9 353.8 2320 353.8 L2342.1 353.8 Q2346.2 353.8 2346.2 349.7 L2346.2 335" fill="none" stroke="#a4a4a4" stroke-width="4"/><path d="M2348.5 316.3 L2346.9 325.3 L2352.9 330.6 L2344.9 329.8 L2339 336.8 L2340.3 327.8 L2334.3 322.5 L2342.4 323.2 Z" fill="#a4a4a4"/><path d="M2334.3 333.9 L2333.4 339.15 L2336.8 342.3 L2332.1 342 L2328.3 346 L2329.2 340.6 L2325.8 337.2 L2330.6 337.8 Z" fill="#a4a4a4"/></svg>
<div style="left:2373px;top:99px;width:505px;height:55px;background:#424242;"></div>
<div style="left:2373px;top:99px;width:165px;height:55px;background:#535353;"></div>
<div style="left:2538px;top:152px;width:340px;height:2px;background:#383838;"></div>
<div style="left:2637.5px;top:99px;width:1.5px;height:53px;background:#383838;"></div>
<div style="left:2802.5px;top:99px;width:1.5px;height:53px;background:#383838;"></div>
<div style="transform:scaleX(0.9535);left:2399.00px;top:112.16px;font:700 24.13px 'Liberation Sans', sans-serif;line-height:26.95px;color:#f0f0f0;white-space:pre;transform-origin:0 0;">Properties</div>
<div style="transform:scaleX(0.8932);left:2563.20px;top:112.16px;font:700 24.13px 'Liberation Sans', sans-serif;line-height:26.95px;color:#bdbdbd;white-space:pre;transform-origin:0 0;">Pages</div>
<div style="transform:scaleX(0.9591);left:2662.00px;top:112.16px;font:700 24.13px 'Liberation Sans', sans-serif;line-height:26.95px;color:#bdbdbd;white-space:pre;transform-origin:0 0;">CC Libraries</div>
<div style="left:2854px;top:154px;width:24px;height:1414px;background:#4b4b4b;"></div>
<div style="left:2856px;top:158px;width:20px;height:1384px;background:#686868;border-radius:10px"></div>
<div style="left:2373px;top:219.5px;width:481px;height:2.2px;background:#4a4a4a;"></div>
<div style="left:2373px;top:484.3px;width:481px;height:2.2px;background:#4a4a4a;"></div>
<div style="left:2373px;top:677.8px;width:481px;height:2.2px;background:#4a4a4a;"></div>
<div style="left:2373px;top:999px;width:481px;height:2.2px;background:#4a4a4a;"></div>
<div style="left:2373px;top:1171.5px;width:481px;height:2.2px;background:#4a4a4a;"></div>
<div style="left:2373px;top:1299px;width:481px;height:2.2px;background:#4a4a4a;"></div>
<div style="transform:scaleX(0.9506);left:2394.60px;top:174.94px;font:400 21.95px 'Liberation Sans', sans-serif;line-height:24.52px;color:#f0f0f0;white-space:pre;transform-origin:0 0;-webkit-text-stroke:0.75px #f0f0f0;">Characters</div>
<div style="transform:scaleX(0.9789);left:2394.50px;top:243.51px;font:400 22.09px 'Liberation Sans', sans-serif;line-height:24.68px;color:#f0f0f0;white-space:pre;transform-origin:0 0;-webkit-text-stroke:0.75px #f0f0f0;">Text Style</div>
<div style="left:2394.5px;top:286.3px;width:437.3px;height:41px;background:#4a4a4a;border:2px solid #717171;border-radius:5px;box-sizing:border-box"></div>
<div style="left:2396px;top:287.8px;width:215.7px;height:38px;background:#2c2c2c;border-radius:3px 0 0 3px"></div>
<div style="left:2611.5px;top:287.8px;width:2px;height:38px;background:#717171;"></div>
<div style="transform:scaleX(0.8887);left:2423.00px;top:294.55px;font:400 23.26px 'Liberation Sans', sans-serif;line-height:25.98px;color:#4ba3f7;white-space:pre;transform-origin:0 0;-webkit-text-stroke:0.75px #4ba3f7;">Paragraph Styles</div>
<div style="transform:scaleX(0.8996);left:2645.00px;top:294.55px;font:400 23.26px 'Liberation Sans', sans-serif;line-height:25.98px;color:#f0f0f0;white-space:pre;transform-origin:0 0;-webkit-text-stroke:0.75px #f0f0f0;">Character Styles</div>
<div style="left:2394.5px;top:344.3px;width:439px;height:69.3px;background:#444444;border:2px solid #717171;border-radius:5px;box-sizing:border-box"></div>
<div style="left:2795px;top:345.8px;width:2px;height:66.3px;background:#717171;"></div>
<div style="left:2406px;top:355px;width:48px;height:47.8px;background:#ffffff;border-radius:4px"></div>
<div style="transform:scaleX(0.9068);left:2413.00px;top:364.47px;font:400 29.77px 'Liberation Serif', serif;line-height:32.96px;color:#000000;white-space:pre;transform-origin:0 0;">Ag</div>
<div style="transform:scaleX(0.8710);left:2466.80px;top:365.06px;font:400 23.69px 'Liberation Sans', sans-serif;line-height:26.46px;color:#f0f0f0;white-space:pre;transform-origin:0 0;-webkit-text-stroke:0.75px #f0f0f0;">[Basic Paragraph]</div>
<div style="transform:scaleX(0.9523);left:2394.40px;top:507.11px;font:400 22.09px 'Liberation Sans', sans-serif;line-height:24.68px;color:#f0f0f0;white-space:pre;transform-origin:0 0;-webkit-text-stroke:0.75px #f0f0f0;">Appearance</div>
<div style="left:2400.6px;top:556.8px;width:34.8px;height:34.1px;background:#ffffff;border:1px solid #aaa;box-sizing:border-box"></div>
<div style="transform:scaleX(0.9294);left:2462.20px;top:558.77px;font:400 22.24px 'Liberation Sans', sans-serif;line-height:24.84px;color:#f0f0f0;white-space:pre;transform-origin:0 0;-webkit-text-stroke:0.75px #f0f0f0;">Fill</div>
<div style="left:2400.6px;top:614.8px;width:33.7px;height:33px;background:#ffffff;border:1px solid #aaa;box-sizing:border-box"></div>
<div style="transform:scaleX(0.9461);left:2462.20px;top:617.47px;font:400 22.24px 'Liberation Sans', sans-serif;line-height:24.84px;color:#c8c8c8;white-space:pre;transform-origin:0 0;-webkit-text-stroke:0.75px #c8c8c8;">Stroke</div>
<div style="left:2462.2px;top:641.2px;width:61px;height:1.6px;background:#c8c8c8;"></div>
<div style="left:2586.4px;top:608.6px;width:138.8px;height:40.6px;background:#4f4f4f;border-radius:4px"></div>
<div style="left:2619.6px;top:608.6px;width:105.6px;height:40.6px;background:#454545;border:2px solid #717171;border-radius:0 4px 4px 0;box-sizing:border-box"></div>
<div style="left:2688.2px;top:610px;width:2px;height:37.8px;background:#717171;"></div>
<div style="left:2736px;top:608.6px;width:109.5px;height:40.6px;background:#585858;border-radius:4px"></div>
<div style="transform:scaleX(0.9532);left:2394.40px;top:701.01px;font:400 22.09px 'Liberation Sans', sans-serif;line-height:24.68px;color:#f0f0f0;white-space:pre;transform-origin:0 0;-webkit-text-stroke:0.75px #f0f0f0;">Character</div>
<div style="left:2394.4px;top:745.2px;width:439.1999999999998px;height:39.799999999999955px;background:#444444;border:2px solid #717171;border-radius:5px;box-sizing:border-box"></div>
<div style="left:2796px;top:746.7px;width:2px;height:36.799999999999955px;background:#717171;"></div>
<div style="transform:scaleX(0.9925);left:2442.60px;top:752.23px;font:400 21.51px 'Liberation Sans', sans-serif;line-height:24.03px;color:#f0f0f0;white-space:pre;transform-origin:0 0;-webkit-text-stroke:0.75px #f0f0f0;">Minion Pro</div>
<div style="left:2394.4px;top:797px;width:439.1999999999998px;height:39.89999999999998px;background:#444444;border:2px solid #717171;border-radius:5px;box-sizing:border-box"></div>
<div style="left:2796px;top:798.5px;width:2px;height:36.89999999999998px;background:#717171;"></div>
<div style="transform:scaleX(0.9615);left:2402.80px;top:806.53px;font:400 21.51px 'Liberation Sans', sans-serif;line-height:24.03px;color:#f0f0f0;white-space:pre;transform-origin:0 0;-webkit-text-stroke:0.75px #f0f0f0;">Regular</div>
<div style="left:2440.4px;top:848.8px;width:158.69999999999982px;height:39.90000000000009px;background:#444444;border:2px solid #717171;border-radius:5px;box-sizing:border-box"></div>
<div style="left:2442px;top:850.4px;width:34.7px;height:36.7px;background:#3c3c3c;border-radius:4px 0 0 4px"></div>
<div style="left:2476px;top:850.3px;width:2px;height:37px;background:#717171;"></div>
<div style="left:2562px;top:850.3px;width:2px;height:37px;background:#717171;"></div>
<div style="transform:scaleX(1.0600);left:2485.00px;top:858.03px;font:400 21.51px 'Liberation Sans', sans-serif;line-height:24.03px;color:#f0f0f0;white-space:pre;transform-origin:0 0;-webkit-text-stroke:0.75px #f0f0f0;">12 pt</div>
<div style="left:2674.5px;top:848.8px;width:159.0999999999999px;height:39.90000000000009px;background:#444444;border:2px solid #717171;border-radius:5px;box-sizing:border-box"></div>
<div style="left:2676px;top:850.4px;width:34.7px;height:36.7px;background:#3c3c3c;border-radius:4px 0 0 4px"></div>
<div style="left:2710px;top:850.3px;width:2px;height:37px;background:#717171;"></div>
<div style="left:2796px;top:850.3px;width:2px;height:37px;background:#717171;"></div>
<div style="transform:scaleX(1.0532);left:2718.00px;top:858.03px;font:400 21.51px 'Liberation Sans', sans-serif;line-height:24.03px;color:#f0f0f0;white-space:pre;transform-origin:0 0;-webkit-text-stroke:0.75px #f0f0f0;">(14.4 pt</div>
<div style="left:2440.4px;top:900.3px;width:36.3px;height:40.6px;background:#5a5a5a;border-radius:5px 0 0 5px"></div>
<div style="left:2476.7px;top:900.3px;width:122.4px;height:40.6px;background:#444444;border:2px solid #717171;border-radius:0 5px 5px 0;box-sizing:border-box"></div>
<div style="left:2562px;top:901.8px;width:2px;height:37.6px;background:#717171;"></div>
<div style="transform:scaleX(0.9931);left:2484.30px;top:909.83px;font:400 21.51px 'Liberation Sans', sans-serif;line-height:24.03px;color:#f0f0f0;white-space:pre;transform-origin:0 0;-webkit-text-stroke:0.75px #f0f0f0;">Metrics</div>
<div style="left:2674.5px;top:900.3px;width:159.0999999999999px;height:40.60000000000002px;background:#444444;border:2px solid #717171;border-radius:5px;box-sizing:border-box"></div>
<div style="left:2676px;top:901.9px;width:34.7px;height:37.4px;background:#3c3c3c;border-radius:4px 0 0 4px"></div>
<div style="left:2710px;top:901.8px;width:2px;height:37.6px;background:#717171;"></div>
<div style="left:2796px;top:901.8px;width:2px;height:37.6px;background:#717171;"></div>
<div style="left:2718.00px;top:909.83px;font:400 21.51px 'Liberation Sans', sans-serif;line-height:24.03px;color:#f0f0f0;white-space:pre;transform-origin:0 0;-webkit-text-stroke:0.75px #f0f0f0;">0</div>
<div style="transform:scaleX(0.9359);left:2394.80px;top:1024.31px;font:400 22.09px 'Liberation Sans', sans-serif;line-height:24.68px;color:#f0f0f0;white-space:pre;transform-origin:0 0;-webkit-text-stroke:0.75px #f0f0f0;">Paragraph</div>
<div style="transform:scaleX(0.9827);left:2394.80px;top:1196.01px;font:400 22.09px 'Liberation Sans', sans-serif;line-height:24.68px;color:#f0f0f0;white-space:pre;transform-origin:0 0;-webkit-text-stroke:0.75px #f0f0f0;">Bullets and Numbering</div>
<svg style="left:0;top:0" width="2880" height="1604"><path d="M2805 375 L2813.0 383.5 L2821 375" fill="none" stroke="#e0e0e0" stroke-width="2.2"/><path d="M2412.8 439.2 L2423.7 439.2" stroke="#c4c4c4" stroke-width="2.2"/><rect x="2415.8" y="439" width="2.4" height="19.3" fill="#c4c4c4"/><rect x="2421.4" y="439" width="2.3" height="19.3" fill="#c4c4c4"/><path d="M2417 438.5 L2413 438.5 A5.2 5.2 0 0 0 2413 448.9 L2417 448.9 Z" fill="#c4c4c4"/><path d="M2428.3 455.7 L2434 455.7 L2431.15 459.5 Z" fill="#c4c4c4"/><path d="M2665.5 449.5 L2665.5 435.3 L2680.7 435.3 L2680.7 443" fill="none" stroke="#8a8a8a" stroke-width="1.8"/><rect x="2673.5" y="443.5" width="14.6" height="15" fill="none" stroke="#8a8a8a" stroke-width="3"/><rect x="2658" y="445.8" width="8.6" height="4" fill="#8a8a8a"/><path d="M2665.5 441.2 L2671 447.8 L2665.5 454.4 Z" fill="#8a8a8a"/><path d="M2733.7 439.2 L2746 439.2" stroke="#8a8a8a" stroke-width="2.2"/><rect x="2738" y="439" width="2.4" height="19.3" fill="#8a8a8a"/><rect x="2743.6" y="439" width="2.3" height="19.3" fill="#8a8a8a"/><path d="M2739.2 438.5 L2735 438.5 A5.2 5.2 0 0 0 2735 448.9 L2739.2 448.9 Z" fill="#8a8a8a"/><path d="M2748 454 L2762 440 M2749.5 447 L2760.5 447 M2755 441.5 L2755 452.5" stroke="#8a8a8a" stroke-width="1.5"/><rect x="2801.1" y="438.3" width="19.5" height="19.5" fill="none" stroke="#c4c4c4" stroke-width="2"/><path d="M2810.85 442.3 L2810.85 453.8 M2805.1 448.05 L2816.6 448.05" stroke="#c4c4c4" stroke-width="2.2"/><path d="M2405 561 L2431 561 L2431 569.8 L2427 569.8 L2427 567.5 L2425 565.7 L2420.6 565.7 L2420.6 586.6 L2424 586.6 L2424 589.9 L2412 589.9 L2412 586.6 L2415.4 586.6 L2415.4 565.7 L2411 565.7 L2409 567.5 L2409 569.8 L2405 569.8 Z" fill="#000"/><defs><clipPath id="sc"><rect x="2401" y="615" width="33" height="33"/></clipPath></defs><path d="M2405.5 618.5 L2428 618.5 L2428 628.3 L2424.5 628.3 L2424.5 623 L2419.5 623 L2419.5 639 L2423 639 L2423 643.3 L2411.5 643.3 L2411.5 639 L2415 639 L2415 623 L2409.5 623 L2409.5 628.3 L2405.5 628.3 Z" fill="none" stroke="#d4d4d4" stroke-width="1.1"/><path d="M2399 650 L2436 613" stroke="#ff0000" stroke-width="4.6" clip-path="url(#sc)"/><path d="M2596.5 617 L2603.2 611.5 L2610 617 M2596.5 636 L2603.2 641.5 L2610 636" fill="none" stroke="#8a8a8a" stroke-width="1.8"/><path d="M2699 624.5 L2706.5 632.5 L2714 624.5" fill="none" stroke="#e0e0e0" stroke-width="2.2"/><path d="M2819 624.5 L2826.5 632.5 L2834 624.5" fill="none" stroke="#8a8a8a" stroke-width="2"/><circle cx="2405.5" cy="762" r="6.5" fill="none" stroke="#b0b0b0" stroke-width="2"/><path d="M2410 767 L2417.5 774.5" stroke="#b0b0b0" stroke-width="2.4"/><path d="M2421 762 L2427.25 768.5 L2433.5 762" fill="none" stroke="#b0b0b0" stroke-width="1.8"/><path d="M2807 761 L2815.0 769.5 L2823 761" fill="none" stroke="#e0e0e0" stroke-width="2.2"/><path d="M2807 813 L2815.0 821.5 L2823 813" fill="none" stroke="#e0e0e0" stroke-width="2.2"/><path d="M2452 861.5 L2458.5 855.5 L2465 861.5 M2452 876 L2458.5 882 L2465 876" fill="none" stroke="#e0e0e0" stroke-width="2"/><path d="M2572.5 865 L2580.5 873.5 L2588.5 865" fill="none" stroke="#e0e0e0" stroke-width="2.2"/><path d="M2686 861.5 L2692.5 855.5 L2699 861.5 M2686 876 L2692.5 882 L2699 876" fill="none" stroke="#e0e0e0" stroke-width="2"/><path d="M2807 865 L2815.0 873.5 L2823 865" fill="none" stroke="#e0e0e0" stroke-width="2.2"/><path d="M2452 913 L2458.5 907 L2465 913 M2452 927.5 L2458.5 933.5 L2465 927.5" fill="none" stroke="#8a8a8a" stroke-width="2"/><path d="M2572.5 916.5 L2580.5 925.0 L2588.5 916.5" fill="none" stroke="#e0e0e0" stroke-width="2.2"/><path d="M2686 913 L2692.5 907 L2699 913 M2686 927.5 L2692.5 933.5 L2699 927.5" fill="none" stroke="#e0e0e0" stroke-width="2"/><path d="M2807 916.5 L2815.0 925.0 L2823 916.5" fill="none" stroke="#e0e0e0" stroke-width="2.2"/><path d="M2404.5 855 L2430 855 L2430 863.5 L2427 863.5 L2427 859.5 L2420 859.5 L2420 879.5 L2424 879.5 L2424 883 L2410.5 883 L2410.5 879.5 L2414.5 879.5 L2414.5 859.5 L2407.5 859.5 L2407.5 863.5 L2404.5 863.5 Z" fill="#c4c4c4"/><path d="M2394.2 867.5 L2409.6 867.5 L2409.6 872.5 L2408 872.5 L2408 870 L2403.5 870 L2403.5 881 L2405.8 881 L2405.8 883.3 L2398 883.3 L2398 881 L2400.3 881 L2400.3 870 L2395.8 870 L2395.8 872.5 L2394.2 872.5 Z" fill="#c4c4c4"/><path d="M2648.5 851 L2643 866 M2648.5 851 L2654 866 M2645 861 L2652 861" fill="none" stroke="#c4c4c4" stroke-width="1.6"/><rect x="2640.5" y="865.8" width="22" height="1.8" fill="#c4c4c4"/><path d="M2648.5 869 L2643 883.5 M2648.5 869 L2654 883.5 M2645 878.5 L2652 878.5" fill="none" stroke="#c4c4c4" stroke-width="1.6"/><rect x="2640.5" y="883.2" width="22" height="1.8" fill="#c4c4c4"/><path d="M2633.5 862 L2633.5 879" stroke="#c4c4c4" stroke-width="2"/><path d="M2629.5 866 L2633.5 860 L2637.5 866 Z M2629.5 875 L2633.5 881 L2637.5 875 Z" fill="#c4c4c4"/><path d="M2394.5 909 L2401 927.5 L2407.5 909" fill="none" stroke="#c4c4c4" stroke-width="1.6"/><path d="M2403.5 931 L2411.5 905.5" stroke="#c4c4c4" stroke-width="1.3"/><path d="M2412 927.5 L2420 909 L2428 927.5 M2415 921 L2425 921" fill="none" stroke="#c4c4c4" stroke-width="1.8"/><path d="M2415 934 L2428 934" stroke="#c4c4c4" stroke-width="1.8"/><path d="M2412 934 L2418 930 L2418 938 Z" fill="#c4c4c4"/><rect x="2628" y="905.3" width="36" height="21.5" fill="#c4c4c4"/><path d="M2631.5 908 L2638.5 925 L2645.5 908" fill="none" stroke="#535353" stroke-width="3"/><path d="M2643.5 925 L2651.5 908 L2659.5 925 M2647 920 L2656 920" fill="none" stroke="#535353" stroke-width="2.8"/><path d="M2632 934 L2660 934" stroke="#c4c4c4" stroke-width="1.8"/><path d="M2628 934 L2634 929.5 L2634 938.5 Z M2664 934 L2658 929.5 L2658 938.5 Z" fill="#c4c4c4"/><circle cx="2817.5" cy="972.8" r="3.6" fill="#c8c8c8"/><circle cx="2828" cy="972.8" r="3.6" fill="#c8c8c8"/><circle cx="2838.5" cy="972.8" r="3.6" fill="#c8c8c8"/><rect x="2396.2" y="1068" width="43.8" height="43.8" rx="4" fill="#2c2c2c"/><rect x="2403.9" y="1076.1" width="24.1" height="1.9" fill="#d0d0d0"/><rect x="2403.9" y="1082.1" width="30.2" height="1.9" fill="#d0d0d0"/><rect x="2403.9" y="1088.1" width="24.1" height="1.9" fill="#d0d0d0"/><rect x="2403.9" y="1094.1" width="30.2" height="1.9" fill="#d0d0d0"/><rect x="2403.9" y="1100.1" width="24.1" height="1.9" fill="#d0d0d0"/><rect x="2453.9" y="1076.1" width="24.1" height="1.9" fill="#d0d0d0"/><rect x="2450" y="1082.1" width="32.0" height="1.9" fill="#d0d0d0"/><rect x="2453.9" y="1088.1" width="24.1" height="1.9" fill="#d0d0d0"/><rect x="2450" y="1094.1" width="32.0" height="1.9" fill="#d0d0d0"/><rect x="2453.9" y="1100.1" width="24.1" height="1.9" fill="#d0d0d0"/><rect x="2503.9" y="1076.1" width="24.1" height="1.9" fill="#d0d0d0"/><rect x="2497.9" y="1082.1" width="30.1" height="1.9" fill="#d0d0d0"/><rect x="2503.9" y="1088.1" width="24.1" height="1.9" fill="#d0d0d0"/><rect x="2497.9" y="1094.1" width="30.1" height="1.9" fill="#d0d0d0"/><rect x="2503.9" y="1100.1" width="24.1" height="1.9" fill="#d0d0d0"/><rect x="2552.1" y="1076.1" width="27.7" height="1.9" fill="#d0d0d0"/><rect x="2552.1" y="1082.1" width="27.7" height="1.9" fill="#d0d0d0"/><rect x="2552.1" y="1088.1" width="27.7" height="1.9" fill="#d0d0d0"/><rect x="2552.1" y="1094.1" width="27.7" height="1.9" fill="#d0d0d0"/><rect x="2552.1" y="1100.1" width="19.7" height="1.9" fill="#d0d0d0"/><rect x="2600" y="1076.1" width="27.9" height="1.9" fill="#d0d0d0"/><rect x="2600" y="1082.1" width="27.9" height="1.9" fill="#d0d0d0"/><rect x="2600" y="1088.1" width="27.9" height="1.9" fill="#d0d0d0"/><rect x="2600" y="1094.1" width="27.9" height="1.9" fill="#d0d0d0"/><rect x="2603.9" y="1100.1" width="20.0" height="1.9" fill="#d0d0d0"/><rect x="2648" y="1076.1" width="27.9" height="1.9" fill="#d0d0d0"/><rect x="2648" y="1082.1" width="27.9" height="1.9" fill="#d0d0d0"/><rect x="2648" y="1088.1" width="27.9" height="1.9" fill="#d0d0d0"/><rect x="2648" y="1094.1" width="27.9" height="1.9" fill="#d0d0d0"/><rect x="2656" y="1100.1" width="19.9" height="1.9" fill="#d0d0d0"/><rect x="2695.9" y="1076.1" width="28.0" height="1.9" fill="#d0d0d0"/><rect x="2695.9" y="1082.1" width="28.0" height="1.9" fill="#d0d0d0"/><rect x="2695.9" y="1088.1" width="28.0" height="1.9" fill="#d0d0d0"/><rect x="2695.9" y="1094.1" width="28.0" height="1.9" fill="#d0d0d0"/><rect x="2695.9" y="1100.1" width="28.0" height="1.9" fill="#d0d0d0"/><rect x="2752.1" y="1076.1" width="17.7" height="1.9" fill="#d0d0d0"/><rect x="2748" y="1082.1" width="21.8" height="1.9" fill="#d0d0d0"/><rect x="2752.1" y="1088.1" width="17.7" height="1.9" fill="#d0d0d0"/><rect x="2748" y="1094.1" width="21.8" height="1.9" fill="#d0d0d0"/><rect x="2752.1" y="1100.1" width="17.7" height="1.9" fill="#d0d0d0"/><rect x="2774" y="1074" width="2" height="29.8" fill="#d0d0d0"/><rect x="2795.9" y="1076.1" width="17.7" height="1.9" fill="#d0d0d0"/><rect x="2795.9" y="1082.1" width="22.1" height="1.9" fill="#d0d0d0"/><rect x="2795.9" y="1088.1" width="17.7" height="1.9" fill="#d0d0d0"/><rect x="2795.9" y="1094.1" width="22.1" height="1.9" fill="#d0d0d0"/><rect x="2795.9" y="1100.1" width="17.7" height="1.9" fill="#d0d0d0"/><rect x="2822" y="1074" width="2" height="29.8" fill="#d0d0d0"/><circle cx="2817.3" cy="1144.8" r="3.6" fill="#c8c8c8"/><circle cx="2827.7" cy="1144.8" r="3.6" fill="#c8c8c8"/><circle cx="2838.2" cy="1144.8" r="3.6" fill="#c8c8c8"/><circle cx="2407.5" cy="1253.5" r="3.8" fill="#c8c8c8"/><circle cx="2407.5" cy="1269.5" r="3.8" fill="#c8c8c8"/><rect x="2414" y="1250" width="19.5" height="2" fill="#c8c8c8"/><rect x="2414" y="1256" width="19.5" height="2" fill="#c8c8c8"/><rect x="2414" y="1266" width="19.5" height="2" fill="#c8c8c8"/><rect x="2414" y="1272" width="19.5" height="2" fill="#c8c8c8"/><rect x="2479" y="1250" width="19.5" height="2" fill="#c8c8c8"/><rect x="2479" y="1256" width="19.5" height="2" fill="#c8c8c8"/><rect x="2479" y="1266" width="19.5" height="2" fill="#c8c8c8"/><rect x="2479" y="1272" width="19.5" height="2" fill="#c8c8c8"/></svg>
<div style="transform:scaleX(0.9429);left:2467.50px;top:1244.19px;font:400 15.26px 'Liberation Sans', sans-serif;line-height:17.05px;color:#c8c8c8;white-space:pre;transform-origin:0 0;-webkit-text-stroke:0.75px #c8c8c8;">1</div>
<div style="transform:scaleX(1.1197);left:2467.50px;top:1262.69px;font:400 15.26px 'Liberation Sans', sans-serif;line-height:17.05px;color:#c8c8c8;white-space:pre;transform-origin:0 0;-webkit-text-stroke:0.75px #c8c8c8;">2</div>
<div style="left:2703.8px;top:1238.2px;width:130.69999999999982px;height:40.09999999999991px;background:transparent;border:2px solid #777777;border-radius:5px;box-sizing:border-box"></div>
<div style="transform:scaleX(0.9896);left:2731.50px;top:1246.46px;font:400 22.09px 'Liberation Sans', sans-serif;line-height:24.68px;color:#f0f0f0;white-space:pre;transform-origin:0 0;-webkit-text-stroke:0.75px #f0f0f0;">Options</div>
<div style="transform:scaleX(0.9846);left:2394.80px;top:1311.31px;font:400 22.09px 'Liberation Sans', sans-serif;line-height:24.68px;color:#f0f0f0;white-space:pre;transform-origin:0 0;-webkit-text-stroke:0.75px #f0f0f0;">Quick Actions</div>
<div style="left:2394.3px;top:1354.3px;width:209.69999999999982px;height:41.40000000000009px;background:transparent;border:2px solid #777777;border-radius:5px;box-sizing:border-box"></div>
<div style="transform:scaleX(0.9280);left:2436.50px;top:1363.21px;font:400 22.09px 'Liberation Sans', sans-serif;line-height:24.68px;color:#f0f0f0;white-space:pre;transform-origin:0 0;-webkit-text-stroke:0.75px #f0f0f0;">Change Case</div>
<div style="left:2623.8px;top:1354.3px;width:210.69999999999982px;height:41.40000000000009px;background:transparent;border:2px solid #777777;border-radius:5px;box-sizing:border-box"></div>
<div style="transform:scaleX(0.9787);left:2659.50px;top:1363.21px;font:400 22.09px 'Liberation Sans', sans-serif;line-height:24.68px;color:#f0f0f0;white-space:pre;transform-origin:0 0;-webkit-text-stroke:0.75px #f0f0f0;">New Hyperlink</div>
<div style="left:2394.3px;top:1416.5px;width:209.69999999999982px;height:41.40000000000009px;background:transparent;border:2px solid #777777;border-radius:5px;box-sizing:border-box"></div>
<div style="transform:scaleX(0.9865);left:2425.90px;top:1425.41px;font:400 22.09px 'Liberation Sans', sans-serif;line-height:24.68px;color:#f0f0f0;white-space:pre;transform-origin:0 0;-webkit-text-stroke:0.75px #f0f0f0;">Insert Footnote</div>
<div style="left:2623.8px;top:1416.5px;width:210.69999999999982px;height:41.40000000000009px;background:transparent;border:2px solid #777777;border-radius:5px;box-sizing:border-box"></div>
<div style="transform:scaleX(0.9700);left:2659.50px;top:1425.41px;font:400 22.09px 'Liberation Sans', sans-serif;line-height:24.68px;color:#f0f0f0;white-space:pre;transform-origin:0 0;-webkit-text-stroke:0.75px #f0f0f0;">Insert Endnote</div>
<div style="left:2394.3px;top:1478.2px;width:440.1999999999998px;height:41.399999999999864px;background:transparent;border:2px solid #777777;border-radius:5px;box-sizing:border-box"></div>
<div style="transform:scaleX(0.9638);left:2565.90px;top:1487.11px;font:400 22.09px 'Liberation Sans', sans-serif;line-height:24.68px;color:#f0f0f0;white-space:pre;transform-origin:0 0;-webkit-text-stroke:0.75px #f0f0f0;">Auto Style</div>
<div style="left:2394.3px;top:1540.4px;width:440.1999999999998px;height:41.399999999999864px;background:transparent;border:2px solid #777777;border-radius:5px;box-sizing:border-box"></div>
<div style="transform:scaleX(0.9985);left:2493.30px;top:1549.31px;font:400 22.09px 'Liberation Sans', sans-serif;line-height:24.68px;color:#f0f0f0;white-space:pre;transform-origin:0 0;-webkit-text-stroke:0.75px #f0f0f0;">Fill with Placeholder Text</div>
</body></html>
